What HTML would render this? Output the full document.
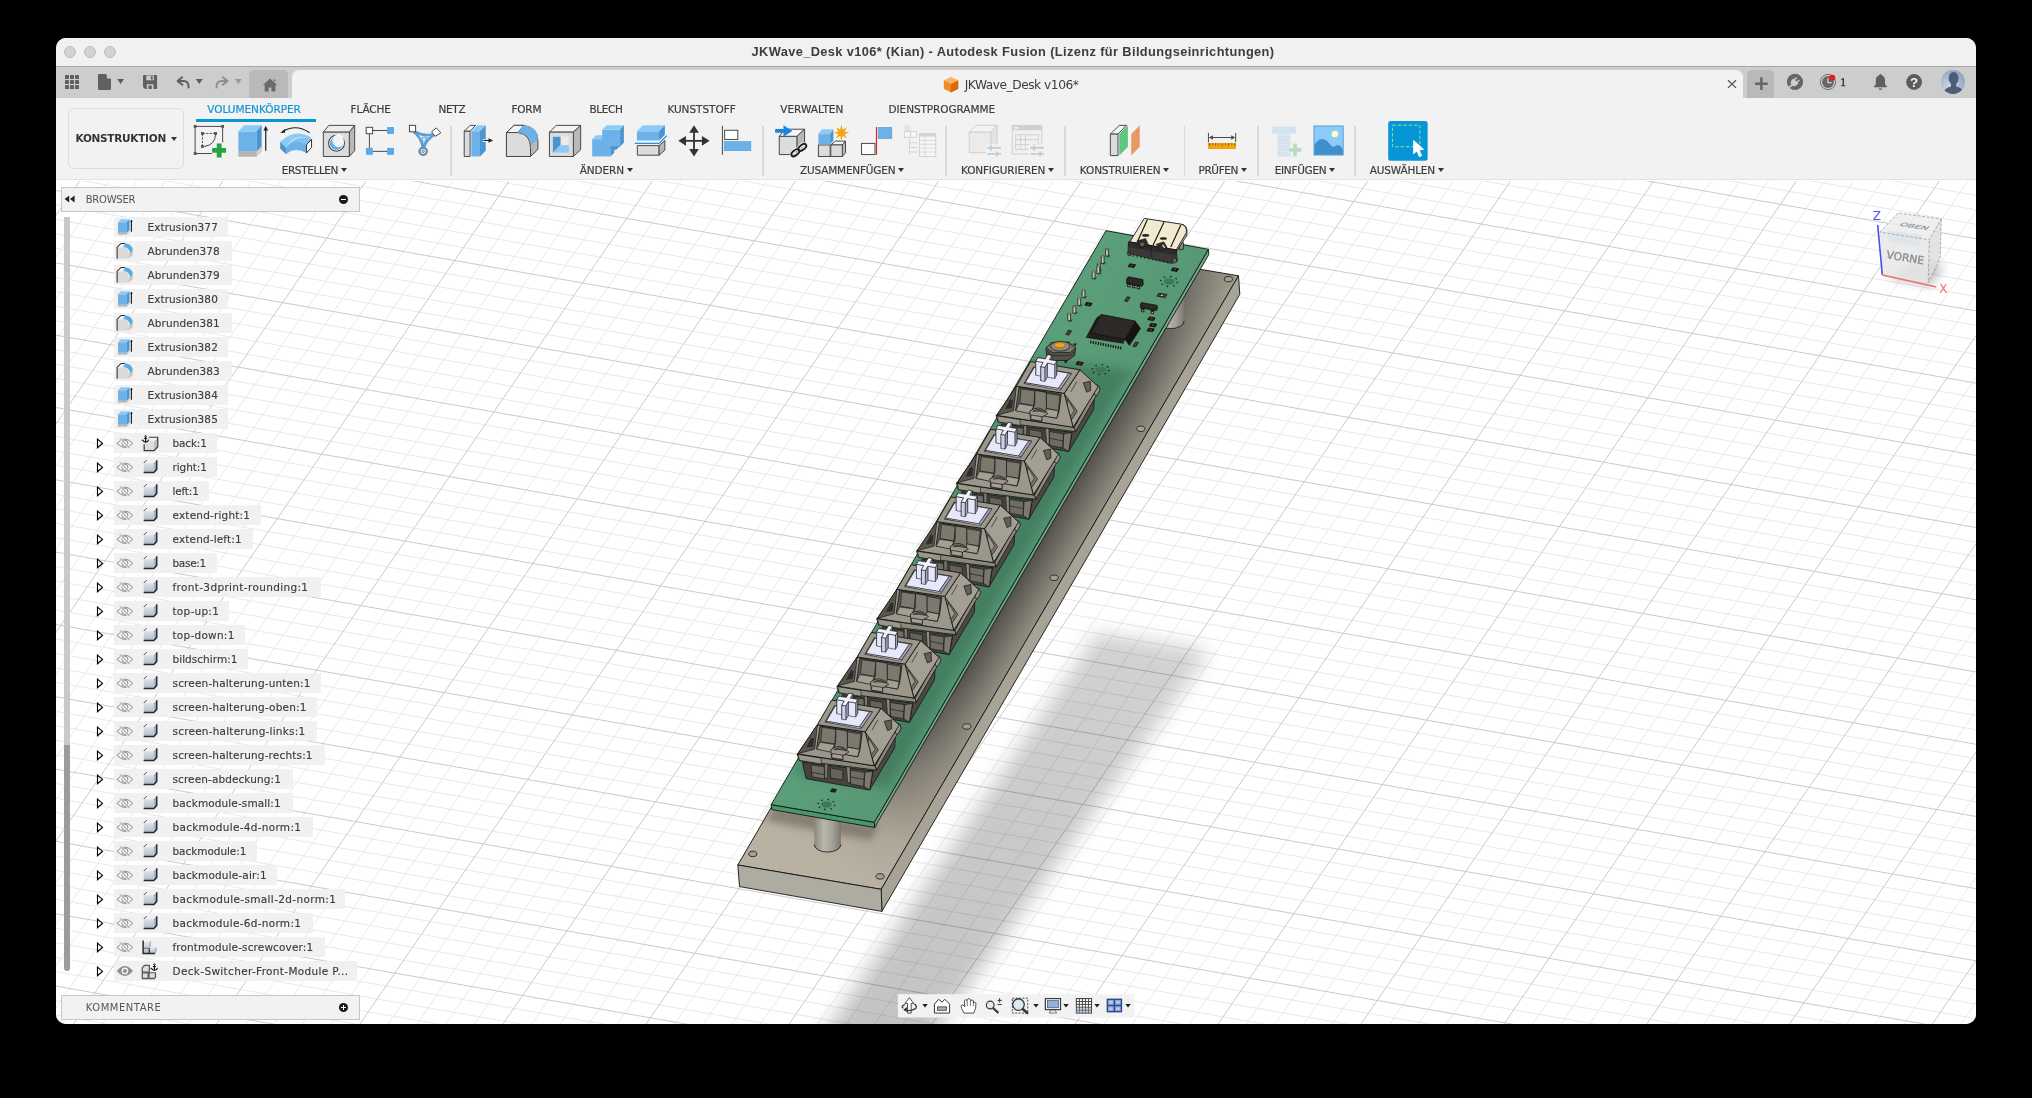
<!DOCTYPE html><html lang="de"><head><meta charset="utf-8"><title>JKWave_Desk v106* (Kian) - Autodesk Fusion</title><style>

*{box-sizing:border-box;margin:0;padding:0}
html,body{width:2032px;height:1098px;background:#000;overflow:hidden}
body{font-family:"DejaVu Sans","Liberation Sans",sans-serif;color:#3c3c3c;position:relative}
#win{will-change:transform;position:absolute;left:56px;top:38px;width:1920px;height:986px;background:#fff;border-radius:10px;overflow:hidden}
.abs{position:absolute}
#title{position:absolute;left:0;top:0;width:1920px;height:29px;background:#f1f1f1;border-bottom:1px solid #a6a6a6}
#title .t{font-family:"Liberation Sans",sans-serif;position:absolute;left:0;width:1914px;top:5.5px;line-height:16px;text-align:center;font-weight:bold;font-size:12.8px;color:#3d3d3d;white-space:nowrap}
.tl{position:absolute;top:8px;width:12px;height:12px;border-radius:50%;background:#d2d2d2;border:1px solid #bdbdbd}
#tabbar{position:absolute;left:0;top:29px;width:1920px;height:31px;background:#cdcdcd}
#doctab{position:absolute;left:236px;top:3px;width:1451px;height:28px;background:#f2f2f2;border-radius:7px 7px 0 0}
#doctab .n{position:absolute;left:0;top:0;white-space:nowrap;font-size:12.2px;line-height:15px;color:#3c3c3c}
#homeb{position:absolute;left:193px;top:3px;width:38.5px;height:28px;background:#b9b9b9;border-radius:5px 5px 0 0}
#plusb{position:absolute;left:1691px;top:3px;width:27px;height:28px;background:#b9b9b9;border-radius:5px 5px 0 0}
#ribbon{position:absolute;left:0;top:60px;width:1920px;height:82px;background:#f2f2f2;border-bottom:1px solid #e2e2e2}
.tab{-webkit-text-stroke:0.2px;position:absolute;top:4.3px;font-size:10.5px;color:#3c3c3c;white-space:nowrap;line-height:14px}
.grp{-webkit-text-stroke:0.2px;position:absolute;top:65.2px;font-size:10.5px;color:#3c3c3c;white-space:nowrap;line-height:14px}
.grp:after{content:"";position:absolute;right:-9px;top:5px;border:3.5px solid transparent;border-top:4px solid #333;border-bottom:0}
.sep{position:absolute;top:28px;width:1.5px;height:50px;background:#d9d9d9}
.ico{position:absolute;top:26px;width:34px;height:34px}
#vp{position:absolute;left:0;top:143px;width:1920px;height:843px;background:#fff;overflow:hidden}
.ph{position:absolute;left:5px;width:299px;height:25px;background:#f2f2f2;border:1px solid #c6c6c6;font-size:10px;color:#555;line-height:23px;padding-left:23.7px;}
.row{position:absolute;height:20px;background:linear-gradient(to bottom,rgba(240,240,240,0) 0.3px,rgba(240,240,240,.93) 0.3px,rgba(240,240,240,.93) 19.7px,rgba(240,240,240,0) 19.7px);font-size:10.5px;color:#3c3c3c;line-height:19px;white-space:nowrap}
.row span{position:absolute;top:0.8px;-webkit-text-stroke:0.15px}

</style></head><body><div id="win">
<div id="title">
<div class="tl" style="left:8px"></div>
<div class="tl" style="left:28px"></div>
<div class="tl" style="left:48px"></div>
<div class="t"><span id="ttl" style="letter-spacing:0.385px;">JKWave_Desk v106* (Kian) - Autodesk Fusion (Lizenz für Bildungseinrichtungen)</span></div>
</div>
<div id="tabbar"><div id="homeb"></div><div id="doctab"><div class="n" id="docname" style="left:672.7px;top:8.1px;letter-spacing:-0.455px;">JKWave_Desk v106*</div></div><div id="plusb"></div>
<svg class="abs" style="left:0;top:0" width="1920" height="31" viewBox="56 67 1920 31"><rect x="65.0" y="75.0" width="4" height="4" rx="0.6" fill="#606060"/><rect x="70.0" y="75.0" width="4" height="4" rx="0.6" fill="#606060"/><rect x="75.0" y="75.0" width="4" height="4" rx="0.6" fill="#606060"/><rect x="65.0" y="80.0" width="4" height="4" rx="0.6" fill="#606060"/><rect x="70.0" y="80.0" width="4" height="4" rx="0.6" fill="#606060"/><rect x="75.0" y="80.0" width="4" height="4" rx="0.6" fill="#606060"/><rect x="65.0" y="85.0" width="4" height="4" rx="0.6" fill="#606060"/><rect x="70.0" y="85.0" width="4" height="4" rx="0.6" fill="#606060"/><rect x="75.0" y="85.0" width="4" height="4" rx="0.6" fill="#606060"/><path d="M98 75.2q0-1.2 1.2-1.2h6.8l5 5v9.8q0 1.2-1.2 1.2h-10.6q-1.2 0-1.2-1.2z" fill="#606060"/><path d="M106.8 74.3v4.2h4.2z" fill="#cdcdcd"/><path d="M117.19999999999999 78.9h6.8l-3.4 5z" fill="#5a5a5a"/><path d="M143 76q0-1 1-1h12.1q1 0 1 1v12q0 1-1 1h-11.1l-2-2z" fill="#606060"/><path d="M146.3 75.6h7.6v4.600h-7.6zM146.8 84.3h6.6v4.7h-6.6z" fill="#cdcdcd"/><path d="M150.8 76.2h1.900v3.200h-1.900zM148.4 85.600h3.400v3.400h-3.400z" fill="#606060"/><path d="M149 76.4h2.2v3.4h-2.2zM148.6 85.9h3v3.1h-3z" fill="#606060" opacity="0"/><path d="M148.5 75.6h3.3v3.3h-3.3z" fill="#606060" opacity="0"/><path d="M182.2 77.2l-4.6 3.9 4.9 3.6" fill="none" stroke="#606060" stroke-width="2" stroke-linecap="round" stroke-linejoin="round"/><path d="M178.4 81.1h5.2q5 0 5 6.3" fill="none" stroke="#606060" stroke-width="2" stroke-linecap="round"/><path d="M195.9 78.9h6.8l-3.4 5z" fill="#5a5a5a"/><path d="M222.9 77.2l4.6 3.9-4.9 3.6" fill="none" stroke="#8f8f8f" stroke-width="2" stroke-linecap="round" stroke-linejoin="round"/><path d="M226.7 81.1h-5.2q-5 0-5 6.3" fill="none" stroke="#8f8f8f" stroke-width="2" stroke-linecap="round"/><path d="M234.9 78.9h6.8l-3.4 5z" fill="#9a9a9a"/><path d="M270 78.6l7.3 6.6h-1.9v6.4h-3.9v-4.2h-2.9v4.2h-3.9v-6.4h-1.9z" fill="#6b6b6b"/><path d="M273.6 79.6h1.8v2.6l-1.8-1.6z" fill="#6b6b6b"/><path d="M943.8 80.6l7.2-3.4 7.2 3.4v8.2l-7.2 3.6-7.2-3.6z" fill="#f08a24"/><path d="M943.8 80.6l7.2 3.4 7.2-3.4-7.2-3.4z" fill="#ffb266"/><path d="M951 84v8.4l7.2-3.6v-8.2z" fill="#d96a0c"/><path d="M1728 80.3l8 7.6M1736 80.3l-8 7.6" stroke="#555" stroke-width="1.3" fill="none"/><path d="M1761.4 77.3v12.7M1755 83.65h12.8" stroke="#666" stroke-width="2.5" fill="none"/><g transform="translate(1795 81.8)"><circle r="7.9" fill="#666"/><g transform="rotate(45)" fill="#cdcdcd"><path d="M-3.5 -1.3h7v2.3a3.5 3.5 0 0 1 -7 0z"/><rect x="-2.5" y="-4.3" width="1.4" height="3.4"/><rect x="1.1" y="-4.3" width="1.4" height="3.4"/><rect x="-0.9" y="3.5" width="1.8" height="6"/></g><circle r="7.1" fill="none" stroke="#666" stroke-width="1.6" stroke-dasharray="19.5 2.8" transform="rotate(150)"/></g><g transform="translate(1828 82)"><circle r="7.6" fill="none" stroke="#666" stroke-width="0.9"/><circle r="5.9" fill="#666"/><path d="M-0.2 -3.8v4.5h3.8" fill="none" stroke="#d4d4d4" stroke-width="1.2"/><circle cx="4.3" cy="-4.3" r="3" fill="#e41b1f"/></g><text x="1839.9" y="86" font-family="'Liberation Serif',serif" font-size="12.5" fill="#2e2e2e" stroke="#2e2e2e" stroke-width="0.25">1</text><g transform="translate(1880.4 82)" fill="#5f5f5f"><path d="M0 -7.9q1.1 0 1.2 1.2q3.4 1.1 3.4 5.2v3q0 1.6 1.9 2.9v0.9h-13v-0.9q1.9-1.3 1.9-2.9v-3q0-4.1 3.4-5.2q0.100-1.200 1.200-1.200z"/><path d="M-1.900 6.600h3.800q-0.300 1.500-1.900 1.500t-1.900-1.500z"/></g><circle cx="1914.1" cy="82" r="7.9" fill="#5c5c5c"/><text x="1914.1" y="86.8" text-anchor="middle" font-family="'Liberation Sans',sans-serif" font-weight="bold" font-size="13.5" fill="#f4f4f4">?</text><defs><radialGradient id="avg" cx="0.35" cy="0.7" r="0.9"><stop offset="0" stop-color="#cdd8e6"/><stop offset="1" stop-color="#7f98ba"/></radialGradient><clipPath id="avc"><circle cx="1953" cy="82" r="11.9"/></clipPath></defs><circle cx="1953" cy="82" r="11.9" fill="url(#avg)"/><g clip-path="url(#avc)" fill="#4e5d76"><ellipse cx="1953.6" cy="78.2" rx="4.9" ry="6.3"/><path d="M1951 82h5.200v4.500q5.400 1.600 6.600 4.200v4h-18.400v-4q1.200-2.600 6.600-4.200z"/></g></svg>
</div>
<div id="ribbon">
<div class="abs" style="left:12px;top:10px;width:116px;height:61px;border:1.5px solid #dcdcdc;border-radius:6px"></div>
<div class="abs" id="konst" style="letter-spacing:-0.270px;left:19.5px;top:33.3px;font-weight:bold;font-size:10.5px;color:#333;white-space:nowrap;line-height:14px">KONSTRUKTION</div>
<div class="abs" style="left:115px;top:38.5px;border:3.5px solid transparent;border-top:4px solid #333;border-bottom:0"></div>
<div class="tab" id="tab0" style="left:151.3px;color:#1394d6;letter-spacing:-0.028px;">VOLUMENKÖRPER</div>
<div class="tab" id="tab1" style="left:294.5px;letter-spacing:-0.117px;">FLÄCHE</div>
<div class="tab" id="tab2" style="left:382.4px;letter-spacing:-0.302px;">NETZ</div>
<div class="tab" id="tab3" style="left:455.4px;letter-spacing:-0.168px;">FORM</div>
<div class="tab" id="tab4" style="left:533.5px;letter-spacing:-0.364px;">BLECH</div>
<div class="tab" id="tab5" style="left:611.4px;letter-spacing:-0.036px;">KUNSTSTOFF</div>
<div class="tab" id="tab6" style="left:724.3px;letter-spacing:0.000px;">VERWALTEN</div>
<div class="tab" id="tab7" style="left:832.6px;letter-spacing:-0.080px;">DIENSTPROGRAMME</div>
<div class="abs" style="left:139.5px;top:20.5px;width:120px;height:3px;background:#0696d7"></div>
<div class="grp" id="grp0" style="left:225.7px;letter-spacing:-0.383px;">ERSTELLEN</div>
<div class="grp" id="grp1" style="left:523.8px;letter-spacing:-0.120px;">ÄNDERN</div>
<div class="grp" id="grp2" style="left:744.0px;letter-spacing:-0.192px;">ZUSAMMENFÜGEN</div>
<div class="grp" id="grp3" style="left:905.0px;letter-spacing:-0.154px;">KONFIGURIEREN</div>
<div class="grp" id="grp4" style="left:1023.8px;letter-spacing:-0.118px;">KONSTRUIEREN</div>
<div class="grp" id="grp5" style="left:1142.6px;letter-spacing:-0.424px;">PRÜFEN</div>
<div class="grp" id="grp6" style="left:1218.7px;letter-spacing:-0.280px;">EINFÜGEN</div>
<div class="grp" id="grp7" style="left:1313.8px;letter-spacing:-0.174px;">AUSWÄHLEN</div>
<div class="sep" style="left:394.1px"></div>
<div class="sep" style="left:706.4px"></div>
<div class="sep" style="left:889.2px"></div>
<div class="sep" style="left:1008.2px"></div>
<div class="sep" style="left:1127.5px"></div>
<div class="sep" style="left:1201.0px"></div>
<div class="sep" style="left:1298.2px"></div>
<svg class="abs" style="left:0;top:0" width="1920" height="82" viewBox="56 98 1920 82"><polyline points="195.12,126.40 222.63,126.40" fill="none" stroke="#4a4a4a" stroke-width="1" /><polyline points="195.12,126.40 195.12,153.53" fill="none" stroke="#4a4a4a" stroke-width="1" /><polyline points="222.63,126.40 222.63,142.39" fill="none" stroke="#4a4a4a" stroke-width="1" /><polyline points="195.12,153.53 211.75,153.53" fill="none" stroke="#4a4a4a" stroke-width="1" /><rect x="193.71" y="124.99" width="2.82" height="2.82" fill="#555" /><rect x="221.22" y="124.99" width="2.82" height="2.82" fill="#555" /><rect x="193.71" y="152.12" width="2.82" height="2.82" fill="#555" /><polyline points="202.41,146.49 202.41,133.44 215.59,133.44" fill="none" stroke="#4a4a4a" stroke-width="1" stroke-dasharray="2.2 1.2"/><path d="M215.59 133.44Q215.59 144.95 204.08 146.49" fill="none" stroke="#4a4a4a" stroke-width="1" stroke-linejoin="round" /><rect x="201.00" y="132.03" width="2.82" height="2.82" fill="#555" /><rect x="214.18" y="132.03" width="2.82" height="2.82" fill="#555" /><rect x="201.00" y="145.08" width="2.82" height="2.82" fill="#555" /><path d="M216.74 143.42L221.61 143.42 221.61 147.90 226.08 147.90 226.08 152.76 221.61 152.76 221.61 157.49 216.74 157.49 216.74 152.76 212.14 152.76 212.14 147.90 216.74 147.90Z" fill="#22a447" /><polygon points="238.37,151.35 256.54,151.35 261.66,146.23 261.66,151.35 256.54,156.72 238.37,156.72" fill="#b4b4b4" /><polygon points="256.54,151.35 261.66,146.23 261.66,151.35 256.54,156.72" fill="#d2d2d2" /><polygon points="238.37,131.52 256.54,131.52 256.54,151.35 238.37,151.35" fill="#6cb2e8" /><polygon points="238.37,131.52 243.74,125.37 261.66,125.37 256.54,131.52" fill="#8ccbf8" /><polygon points="256.54,131.52 261.66,125.37 261.66,146.23 256.54,151.35" fill="#4a94d0" /><polyline points="265.75,150.71 265.75,128.96" fill="none" stroke="#222" stroke-width="1.2" /><polygon points="265.75,125.76 268.06,130.49 263.45,130.49" fill="#222" /><path d="M280.21 141.75Q294.93 127.68 310.92 137.27L310.92 140.47Q294.93 131.52 285.97 147.51Z" fill="#8ccbf8" /><path d="M280.21 141.75L285.97 147.51 285.97 154.29 280.21 148.41Z" fill="#4a94d0" /><path d="M285.97 147.51Q294.93 136.63 306.44 144.95L306.44 153.01Q294.93 146.23 285.97 154.29Z" fill="#6cb2e8" /><path d="M285.97 147.51Q294.93 134.08 310.92 139.19L306.44 144.95Q294.93 137.91 285.97 147.51Z" fill="#7cc0f2" /><polygon points="306.44,144.95 311.56,139.19 311.56,147.51 306.44,153.01" fill="#fff" stroke="#333" stroke-width="1" stroke-linejoin="round" /><path d="M309.64 132.80Q296.21 123.20 282.13 131.77" fill="none" stroke="#222" stroke-width="1.1" stroke-linejoin="round" /><polygon points="280.21,133.05 285.33,128.70 284.95,132.80" fill="#222" /><polygon points="323.33,132.16 328.84,125.37 354.68,125.37 349.31,132.16" fill="#ededed" stroke="#4a4a4a" stroke-width="1" stroke-linejoin="round" /><polygon points="349.31,132.16 354.68,125.37 354.68,150.71 349.31,156.47" fill="#b9b9b9" stroke="#4a4a4a" stroke-width="1" stroke-linejoin="round" /><polygon points="323.33,132.16 349.31,132.16 349.31,156.47 323.33,156.47" fill="#dcdcdc" stroke="#4a4a4a" stroke-width="1" stroke-linejoin="round" /><circle cx="336.51" cy="143.29" r="7.93" fill="#fff" stroke="#444" stroke-width="1.1" /><circle cx="336.51" cy="143.29" r="6.14" fill="#6cb2e8" stroke="#4a94d0" stroke-width="0.8" /><path d="M333.31 137.27A6.40 6.40 0 0 1 342.91 142.39A5.37 5.37 0 0 0 333.31 137.27Z" fill="#fff" /><path d="M334.34 136.38A6.65 6.65 0 0 1 343.17 145.34A5.76 5.76 0 0 1 334.34 136.38Z" fill="#f2f2f2" /><polyline points="369.40,130.49 390.51,130.49" fill="none" stroke="#4a4a4a" stroke-width="1" /><polyline points="369.40,130.49 369.40,151.35 390.51,151.35" fill="none" stroke="#4a4a4a" stroke-width="1" /><rect x="366.20" y="127.29" width="6.40" height="6.40" fill="#fff" stroke="#4a4a4a" stroke-width="1" /><rect x="387.06" y="127.04" width="6.91" height="6.91" fill="#5ba9e6" /><rect x="365.94" y="147.90" width="6.91" height="6.91" fill="#5ba9e6" /><rect x="387.06" y="147.90" width="6.91" height="6.91" fill="#5ba9e6" /><path d="M413.29 131.52Q420.97 135.99 423.14 148.79" fill="none" stroke="#5b9fd8" stroke-width="2.6" stroke-linejoin="round" /><path d="M436.32 133.82Q426.72 137.91 423.14 148.79" fill="none" stroke="#5b9fd8" stroke-width="2.6" stroke-linejoin="round" /><path d="M413.93 131.52Q424.80 137.27 435.68 133.82" fill="none" stroke="#5b9fd8" stroke-width="2.6" stroke-linejoin="round" /><path d="M421.86 137.27L426.98 137.27 423.40 145.59Z" fill="#cfe3f5" stroke="#3f86c4" stroke-width="0.7" stroke-linejoin="round" /><rect x="409.45" y="125.37" width="6.14" height="6.40" fill="#fff" stroke="#4a4a4a" stroke-width="1" /><polygon points="436.32,127.93 440.80,132.80 435.04,136.38 431.59,131.77" fill="#fff" stroke="#4a4a4a" stroke-width="1" stroke-linejoin="round" /><circle cx="423.14" cy="151.35" r="4.86" fill="#5b9fd8" /><circle cx="423.14" cy="151.35" r="3.20" fill="#f4f4f4" stroke="#555" stroke-width="0.8" /><circle cx="423.14" cy="151.35" r="1.15" fill="none" stroke="#555" stroke-width="0.8" /><polygon points="464.21,131.26 470.10,125.37 475.47,125.37 470.10,131.26" fill="#f4f4f4" stroke="#4a4a4a" stroke-width="1" stroke-linejoin="round" /><polygon points="464.21,131.26 470.10,131.26 470.10,156.47 464.21,156.47" fill="#dcdcdc" stroke="#4a4a4a" stroke-width="1" stroke-linejoin="round" /><polygon points="471.38,131.26 479.95,131.26 479.95,156.47 471.38,156.47" fill="#6cb2e8" /><polygon points="471.38,131.26 477.01,125.37 485.71,125.37 479.95,131.26" fill="#8ccbf8" /><polygon points="479.95,131.26 485.71,125.37 485.71,150.71 479.95,156.47" fill="#4a94d0" /><rect x="482.90" y="139.19" width="4.09" height="2.82" fill="#f2f2f2" /><polyline points="483.41,140.47 490.19,140.47" fill="none" stroke="#222" stroke-width="1.1" /><polygon points="493.13,140.47 488.53,138.17 488.53,142.78" fill="#222" /><path d="M506.44 132.54L514.12 125.37 523.46 125.37Q538.17 127.68 537.92 140.47L537.92 149.43 530.50 156.47 506.44 156.47Z" fill="#b9b9b9" stroke="#4a4a4a" stroke-width="1" stroke-linejoin="round" /><path d="M506.44 132.54L517.70 132.54Q530.50 134.08 530.50 147.51L530.50 156.47 506.44 156.47Z" fill="#dcdcdc" stroke="#4a4a4a" stroke-width="1" stroke-linejoin="round" /><path d="M506.44 132.54L514.12 125.37 524.10 125.37 517.70 132.54Z" fill="#f4f4f4" stroke="#4a4a4a" stroke-width="1" stroke-linejoin="round" /><path d="M517.70 132.54L524.10 125.37Q538.17 127.04 537.92 139.19L531.52 144.95Q530.50 134.08 517.70 132.54Z" fill="#6cb2e8" /><polygon points="549.43,132.16 556.34,125.37 580.66,125.37 573.36,132.16" fill="#f4f4f4" stroke="#4a4a4a" stroke-width="1" stroke-linejoin="round" /><polygon points="573.36,132.16 580.66,125.37 580.66,149.69 573.36,156.47" fill="#b9b9b9" stroke="#4a4a4a" stroke-width="1" stroke-linejoin="round" /><polygon points="549.43,132.16 573.36,132.16 573.36,156.47 549.43,156.47" fill="#dcdcdc" stroke="#4a4a4a" stroke-width="1" stroke-linejoin="round" /><rect x="552.89" y="136.63" width="15.99" height="15.99" fill="#ececec" /><polygon points="552.89,136.63 560.57,136.63 560.57,144.95 552.89,152.63" fill="#4a94d0" /><polygon points="552.89,152.63 560.57,144.95 568.88,144.95 568.88,152.63" fill="#8ccbf8" /><polygon points="592.17,139.19 595.75,135.36 603.43,135.36 603.43,139.19" fill="#8ccbf8" /><polygon points="592.17,139.19 610.47,139.19 610.47,156.47 592.17,156.47" fill="#6cb2e8" /><polygon points="610.47,146.87 614.31,146.87 614.31,152.63 610.47,156.47" fill="#4a94d0" /><polygon points="602.15,129.60 620.07,129.60 620.07,146.87 602.15,146.87" fill="#6cb2e8" /><polygon points="602.15,129.60 606.63,125.37 623.91,125.37 620.07,129.60" fill="#8ccbf8" /><polygon points="620.07,129.60 623.91,125.37 623.91,142.39 620.07,146.87" fill="#4a94d0" /><polygon points="610.47,146.23 620.07,146.23 616.23,149.69 610.47,149.69" fill="#4a94d0" /><polygon points="637.34,145.59 659.09,145.59 659.09,155.19 637.34,155.19" fill="#dcdcdc" stroke="#4a4a4a" stroke-width="1" stroke-linejoin="round" /><polygon points="659.09,145.59 664.85,140.47 664.85,150.07 659.09,155.19" fill="#b9b9b9" stroke="#4a4a4a" stroke-width="1" stroke-linejoin="round" /><polygon points="636.96,131.26 659.09,131.26 659.09,140.47 636.96,140.47" fill="#6cb2e8" /><polygon points="636.96,131.26 642.84,125.37 664.85,125.37 659.09,131.26" fill="#8ccbf8" /><polygon points="659.09,131.26 664.85,125.37 664.85,134.72 659.09,140.47" fill="#4a94d0" /><polyline points="634.78,143.42 659.09,143.42 666.77,135.61" fill="none" stroke="#2a8fe0" stroke-width="1.3" /><polyline points="684.05,140.86 703.88,140.86" fill="none" stroke="#333" stroke-width="1.8" /><polyline points="694.03,130.88 694.03,150.71" fill="none" stroke="#333" stroke-width="1.8" /><polygon points="678.29,140.86 685.97,135.99 685.97,145.72" fill="#333" /><polygon points="709.64,140.86 701.96,135.99 701.96,145.72" fill="#333" /><polygon points="694.03,125.37 689.17,132.80 698.89,132.80" fill="#333" /><polygon points="694.03,156.47 689.17,149.05 698.89,149.05" fill="#333" /><polyline points="722.42,125.76 722.42,154.80" fill="none" stroke="#4a4a4a" stroke-width="1" /><rect x="724.60" y="130.24" width="13.18" height="9.21" fill="#fff" stroke="#4a4a4a" stroke-width="1" /><rect x="724.21" y="141.50" width="26.62" height="9.21" fill="#6cb2e8" stroke="#4f9bd6" stroke-width="0.6" /><polygon points="779.24,136.38 784.74,129.21 804.57,129.21 796.89,136.38" fill="#f6f6f6" stroke="#4a4a4a" stroke-width="1" stroke-linejoin="round" /><polygon points="796.89,136.38 804.57,129.21 804.57,147.51 796.89,154.55" fill="#b9b9b9" stroke="#4a4a4a" stroke-width="1" stroke-linejoin="round" /><polygon points="779.24,136.38 796.89,136.38 796.89,154.55 779.24,154.55" fill="#dcdcdc" stroke="#4a4a4a" stroke-width="1" stroke-linejoin="round" /><polygon points="775.14,128.96 783.46,128.96 783.46,125.37 792.42,130.88 783.46,136.63 783.46,132.80 775.14,132.80" fill="#1a86e0" /><ellipse cx="795.36" cy="152.76" rx="4.6" ry="2.5" transform="rotate(-38 795.36 152.76)" fill="none" stroke="#f2f2f2" stroke-width="3.4"/><ellipse cx="802.27" cy="147.38" rx="4.6" ry="2.5" transform="rotate(-38 802.27 147.38)" fill="none" stroke="#f2f2f2" stroke-width="3.4"/><ellipse cx="795.36" cy="152.76" rx="4.6" ry="2.5" transform="rotate(-38 795.36 152.76)" fill="none" stroke="#1e1e1e" stroke-width="1.9"/><ellipse cx="802.27" cy="147.38" rx="4.6" ry="2.5" transform="rotate(-38 802.27 147.38)" fill="none" stroke="#1e1e1e" stroke-width="1.9"/><polygon points="830.80,144.95 835.28,141.11 845.52,141.11 842.32,144.95" fill="#f6f6f6" stroke="#4a4a4a" stroke-width="1" stroke-linejoin="round" /><polygon points="842.32,144.95 845.52,141.11 845.52,152.63 842.32,156.47" fill="#b9b9b9" stroke="#4a4a4a" stroke-width="1" stroke-linejoin="round" /><rect x="818.39" y="144.95" width="11.77" height="11.52" fill="#dcdcdc" stroke="#4a4a4a" stroke-width="1" /><rect x="830.80" y="144.95" width="11.52" height="11.52" fill="#dcdcdc" stroke="#4a4a4a" stroke-width="1" /><polygon points="818.39,134.08 830.16,134.08 830.16,144.31 818.39,144.31" fill="#6cb2e8" /><polygon points="818.39,134.08 821.85,129.21 833.36,129.21 830.16,134.08" fill="#8ccbf8" /><polygon points="830.16,134.08 833.36,129.21 833.36,140.47 830.16,144.31" fill="#4a94d0" /><polygon points="841.42,124.86 842.70,129.72 847.03,127.19 844.50,131.52 849.36,132.80 844.50,134.07 847.03,138.41 842.70,135.87 841.42,140.73 840.15,135.87 835.81,138.41 838.35,134.07 833.49,132.80 838.35,131.52 835.81,127.19 840.15,129.72" fill="#f5a30a" /><rect x="861.51" y="143.42" width="13.44" height="11.13" fill="#fbfbfb" stroke="#4a4a4a" stroke-width="1" /><polyline points="876.48,127.04 876.48,154.80" fill="none" stroke="#d8232a" stroke-width="1.2" /><rect x="878.15" y="127.42" width="13.69" height="11.13" fill="#6cb2e8" stroke="#4f9bd6" stroke-width="0.6" /><rect x="904.38" y="125.37" width="6.14" height="5.89" fill="#d3e6f5" /><rect x="904.38" y="131.52" width="6.14" height="5.76" fill="#f8f8f8" stroke="#d4d4d4" stroke-width="1" /><rect x="910.78" y="131.52" width="5.76" height="5.76" fill="#f8f8f8" stroke="#d4d4d4" stroke-width="1" /><polyline points="909.50,139.19 909.50,154.55" fill="none" stroke="#d4d4d4" stroke-width="1" /><polyline points="909.50,142.78 916.92,142.78" fill="none" stroke="#d4d4d4" stroke-width="1" /><polyline points="909.50,147.51 916.92,147.51" fill="none" stroke="#d4d4d4" stroke-width="1" /><polyline points="909.50,151.99 916.92,151.99" fill="none" stroke="#d4d4d4" stroke-width="1" /><rect x="919.48" y="133.44" width="16.25" height="23.03" fill="#f6f6f6" stroke="#d4d4d4" stroke-width="1" /><rect x="919.48" y="133.44" width="16.25" height="3.20" fill="#d4d4d4" /><polyline points="919.48,140.47 935.73,140.47" fill="none" stroke="#d4d4d4" stroke-width="0.8" /><polyline points="919.48,144.31 935.73,144.31" fill="none" stroke="#d4d4d4" stroke-width="0.8" /><polyline points="919.48,148.15 935.73,148.15" fill="none" stroke="#d4d4d4" stroke-width="0.8" /><polyline points="919.48,151.99 935.73,151.99" fill="none" stroke="#d4d4d4" stroke-width="0.8" /><polyline points="924.85,136.63 924.85,156.47" fill="none" stroke="#d4d4d4" stroke-width="0.8" /><polygon points="969.21,132.16 975.99,125.37 997.11,125.37 990.71,132.16" fill="#f3f3f3" stroke="#d0d0d0" stroke-width="1" stroke-linejoin="round" /><polygon points="990.71,132.16 997.11,125.37 997.11,146.23 990.71,152.63" fill="#e3e3e3" stroke="#d0d0d0" stroke-width="1" stroke-linejoin="round" /><polygon points="969.21,132.16 990.71,132.16 990.71,152.63 969.21,152.63" fill="#ebebeb" stroke="#d0d0d0" stroke-width="1" stroke-linejoin="round" /><rect x="985.59" y="144.31" width="16.63" height="13.44" fill="#f2f2f2" /><rect x="987.13" y="146.87" width="13.82" height="1.92" fill="#cbcbcb" /><rect x="987.13" y="153.01" width="13.82" height="1.79" fill="#cbcbcb" /><rect x="990.07" y="145.34" width="1.92" height="5.37" fill="#a9d3ef" /><rect x="996.21" y="151.35" width="1.79" height="5.37" fill="#cbcbcb" /><rect x="1012.21" y="125.37" width="29.69" height="28.53" fill="#f0f0f0" stroke="#d0d0d0" stroke-width="1" /><rect x="1012.21" y="125.37" width="29.69" height="4.86" fill="#d0d0d0" /><rect x="1014.00" y="127.04" width="4.22" height="1.66" fill="#f6f6f6" /><rect x="1015.66" y="134.72" width="22.65" height="14.72" fill="none" stroke="#d0d0d0" stroke-width="1" /><polyline points="1020.78,134.72 1020.78,149.43" fill="none" stroke="#d0d0d0" stroke-width="1" /><polyline points="1025.52,134.72 1025.52,149.43" fill="none" stroke="#d0d0d0" stroke-width="1" /><polyline points="1015.66,139.58 1038.31,139.58" fill="none" stroke="#d0d0d0" stroke-width="1" /><polyline points="1015.66,144.57 1038.31,144.57" fill="none" stroke="#d0d0d0" stroke-width="1" /><rect x="1028.59" y="144.31" width="16.63" height="13.44" fill="#f2f2f2" /><rect x="1030.12" y="146.87" width="13.82" height="1.92" fill="#cbcbcb" /><rect x="1030.12" y="153.01" width="13.82" height="1.79" fill="#cbcbcb" /><rect x="1033.06" y="145.34" width="1.92" height="5.37" fill="#a9d3ef" /><rect x="1039.21" y="151.35" width="1.79" height="5.37" fill="#cbcbcb" /><polygon points="1110.35,134.08 1119.31,125.37 1126.35,125.37 1118.03,134.08" fill="#f6f6f6" stroke="#4a4a4a" stroke-width="1" stroke-linejoin="round" /><polygon points="1110.35,134.08 1118.03,134.08 1118.03,155.57 1110.35,155.57" fill="#dcdcdc" stroke="#4a4a4a" stroke-width="1" stroke-linejoin="round" /><polygon points="1119.31,134.08 1127.88,125.37 1127.88,146.87 1119.31,155.57" fill="#5cc683" /><polygon points="1131.21,134.33 1139.78,125.37 1139.78,146.87 1131.21,155.57" fill="#e59a63" /><rect x="1208.05" y="143.13" width="27.90" height="5.89" fill="#f5a30a" /><polyline points="1209.33,143.13 1209.33,145.69" fill="none" stroke="#6b4a08" stroke-width="0.8" /><polyline points="1212.53,143.13 1212.53,144.79" fill="none" stroke="#6b4a08" stroke-width="0.8" /><polyline points="1215.73,143.13 1215.73,145.69" fill="none" stroke="#6b4a08" stroke-width="0.8" /><polyline points="1218.93,143.13 1218.93,144.79" fill="none" stroke="#6b4a08" stroke-width="0.8" /><polyline points="1222.13,143.13 1222.13,145.69" fill="none" stroke="#6b4a08" stroke-width="0.8" /><polyline points="1225.33,143.13 1225.33,144.79" fill="none" stroke="#6b4a08" stroke-width="0.8" /><polyline points="1228.53,143.13 1228.53,145.69" fill="none" stroke="#6b4a08" stroke-width="0.8" /><polyline points="1231.72,143.13 1231.72,144.79" fill="none" stroke="#6b4a08" stroke-width="0.8" /><polyline points="1234.92,143.13 1234.92,145.69" fill="none" stroke="#6b4a08" stroke-width="0.8" /><polyline points="1208.44,132.89 1208.44,142.23" fill="none" stroke="#4a4a4a" stroke-width="1" /><polyline points="1235.69,132.89 1235.69,142.23" fill="none" stroke="#4a4a4a" stroke-width="1" /><polyline points="1210.99,137.50 1233.13,137.50" fill="none" stroke="#4a4a4a" stroke-width="1" /><polygon points="1208.82,137.50 1212.91,135.19 1212.91,139.80" fill="#4a4a4a" /><polygon points="1235.31,137.50 1231.21,135.19 1231.21,139.80" fill="#4a4a4a" /><rect x="1272.16" y="126.49" width="23.67" height="7.17" fill="#d3e2f0" rx="1"/><rect x="1277.53" y="133.66" width="12.80" height="23.03" fill="#dbe7f2" rx="1.5"/><polyline points="1277.53,136.47 1290.33,136.47" fill="none" stroke="#cddcea" stroke-width="0.7" /><polyline points="1277.53,138.78 1290.33,138.78" fill="none" stroke="#cddcea" stroke-width="0.7" /><polyline points="1277.53,141.08 1290.33,141.08" fill="none" stroke="#cddcea" stroke-width="0.7" /><polyline points="1277.53,143.38 1290.33,143.38" fill="none" stroke="#cddcea" stroke-width="0.7" /><polyline points="1277.53,145.69 1290.33,145.69" fill="none" stroke="#cddcea" stroke-width="0.7" /><polyline points="1277.53,147.99 1290.33,147.99" fill="none" stroke="#cddcea" stroke-width="0.7" /><polyline points="1277.53,150.29 1290.33,150.29" fill="none" stroke="#cddcea" stroke-width="0.7" /><polyline points="1277.53,152.60 1290.33,152.60" fill="none" stroke="#cddcea" stroke-width="0.7" /><polyline points="1277.53,154.90 1290.33,154.90" fill="none" stroke="#cddcea" stroke-width="0.7" /><path d="M1292.89 143.13L1297.24 143.13 1297.24 147.73 1301.85 147.73 1301.85 152.08 1297.24 152.08 1297.24 156.69 1292.89 156.69 1292.89 152.08 1288.15 152.08 1288.15 147.73 1292.89 147.73Z" fill="#b6dcc0" stroke="#f2f2f2" stroke-width="0.8" stroke-linejoin="round" /><rect x="1314.00" y="125.98" width="29.17" height="29.05" fill="#8ccbfa" stroke="#3d8fd0" stroke-width="0.8" /><path d="M1314.39 154.64L1314.39 144.79Q1321.68 133.91 1329.36 143.51Q1332.56 148.63 1335.75 145.69Q1339.59 143.51 1342.79 149.53L1342.79 154.64Z" fill="#3f8fcc" /><circle cx="1334.86" cy="133.91" r="3.20" fill="#ffffc8" /><rect x="1388.22" y="121.12" width="39.41" height="39.67" fill="#0696d7" rx="2.5"/><rect x="1392.44" y="125.21" width="27.38" height="21.50" fill="none" stroke="#8fe486" stroke-width="1" stroke-dasharray="3.4 2"/><polygon points="1413.17,139.67 1413.17,154.39 1416.75,151.57 1419.18,157.20 1422.26,155.80 1419.70,150.55 1424.30,149.53" fill="#fff" /></svg>
</div>
<div id="vp">
<svg class="abs" style="left:0;top:0" width="1920" height="843" viewBox="0 0 1920 843">
<path d="M53.6 -2.0L-2.0 78.9M82.2 -2.0L-2.0 120.6M110.9 -2.0L-2.0 162.3M139.6 -2.0L-2.0 204.0M196.9 -2.0L-2.0 287.5M225.5 -2.0L-2.0 329.2M254.1 -2.0L-2.0 370.9M282.8 -2.0L-2.0 412.6M340.1 -2.0L-2.0 496.0M368.7 -2.0L-2.0 537.7M397.4 -2.0L-2.0 579.4M426.0 -2.0L-2.0 621.1M483.3 -2.0L-2.0 704.6M511.9 -2.0L-2.0 746.3M540.5 -2.0L-2.0 788.0M569.2 -2.0L-2.0 829.7M626.4 -2.0L44.1 846.0M655.0 -2.0L72.7 846.0M683.7 -2.0L101.4 846.0M712.3 -2.0L130.0 846.0M769.5 -2.0L187.3 846.0M798.2 -2.0L215.9 846.0M826.8 -2.0L244.5 846.0M855.4 -2.0L273.2 846.0M912.6 -2.0L330.4 846.0M941.2 -2.0L359.0 846.0M969.8 -2.0L387.7 846.0M998.5 -2.0L416.3 846.0M1055.7 -2.0L473.5 846.0M1084.3 -2.0L502.2 846.0M1112.9 -2.0L530.8 846.0M1141.5 -2.0L559.4 846.0M1198.7 -2.0L616.6 846.0M1227.3 -2.0L645.2 846.0M1255.9 -2.0L673.9 846.0M1284.5 -2.0L702.5 846.0M1341.7 -2.0L759.7 846.0M1370.3 -2.0L788.3 846.0M1398.9 -2.0L816.9 846.0M1427.4 -2.0L845.5 846.0M1484.6 -2.0L902.7 846.0M1513.2 -2.0L931.3 846.0M1541.8 -2.0L959.9 846.0M1570.4 -2.0L988.5 846.0M1627.5 -2.0L1045.7 846.0M1656.1 -2.0L1074.3 846.0M1684.7 -2.0L1102.9 846.0M1713.3 -2.0L1131.5 846.0M1770.4 -2.0L1188.6 846.0M1799.0 -2.0L1217.2 846.0M1827.6 -2.0L1245.8 846.0M1856.1 -2.0L1274.4 846.0M1913.3 -2.0L1331.6 846.0M1922.0 26.9L1360.1 846.0M1922.0 68.5L1388.7 846.0M1922.0 110.2L1417.3 846.0M1922.0 193.5L1474.4 846.0M1922.0 235.1L1503.0 846.0M1922.0 276.8L1531.6 846.0M1922.0 318.4L1560.2 846.0M1922.0 401.7L1617.3 846.0M1922.0 443.3L1645.9 846.0M1922.0 485.0L1674.4 846.0M1922.0 526.6L1703.0 846.0M1922.0 609.9L1760.1 846.0M1922.0 651.5L1788.7 846.0M1922.0 693.2L1817.2 846.0M1922.0 734.8L1845.8 846.0M1922.0 818.1L1902.9 846.0M1909.0 -2.0L1922.0 0.3M1826.9 -2.0L1922.0 14.7M1744.7 -2.0L1922.0 29.2M1662.6 -2.0L1922.0 43.6M1498.2 -2.0L1922.0 72.5M1416.0 -2.0L1922.0 86.9M1333.8 -2.0L1922.0 101.4M1251.5 -2.0L1922.0 115.8M1087.0 -2.0L1922.0 144.7M1004.8 -2.0L1922.0 159.2M922.5 -2.0L1922.0 173.6M840.2 -2.0L1922.0 188.0M675.6 -2.0L1922.0 216.9M593.3 -2.0L1922.0 231.4M511.0 -2.0L1922.0 245.8M428.6 -2.0L1922.0 260.3M263.9 -2.0L1922.0 289.1M181.6 -2.0L1922.0 303.6M99.2 -2.0L1922.0 318.0M16.8 -2.0L1922.0 332.5M-2.0 23.6L1922.0 361.4M-2.0 38.1L1922.0 375.8M-2.0 52.6L1922.0 390.2M-2.0 67.0L1922.0 404.7M-2.0 96.0L1922.0 433.6M-2.0 110.4L1922.0 448.0M-2.0 124.9L1922.0 462.5M-2.0 139.4L1922.0 476.9M-2.0 168.3L1922.0 505.8M-2.0 182.8L1922.0 520.2M-2.0 197.2L1922.0 534.7M-2.0 211.7L1922.0 549.1M-2.0 240.6L1922.0 578.0M-2.0 255.1L1922.0 592.4M-2.0 269.6L1922.0 606.9M-2.0 284.0L1922.0 621.3M-2.0 313.0L1922.0 650.2M-2.0 327.4L1922.0 664.7M-2.0 341.9L1922.0 679.1M-2.0 356.4L1922.0 693.5M-2.0 385.3L1922.0 722.4M-2.0 399.8L1922.0 736.9M-2.0 414.2L1922.0 751.3M-2.0 428.7L1922.0 765.8M-2.0 457.6L1922.0 794.6M-2.0 472.1L1922.0 809.1M-2.0 486.6L1922.0 823.5M-2.0 501.0L1922.0 838.0M-2.0 530.0L1802.9 846.0M-2.0 544.4L1720.4 846.0M-2.0 558.9L1637.9 846.0M-2.0 573.4L1555.4 846.0M-2.0 602.3L1390.3 846.0M-2.0 616.8L1307.7 846.0M-2.0 631.2L1225.2 846.0M-2.0 645.7L1142.6 846.0M-2.0 674.6L977.4 846.0M-2.0 689.1L894.8 846.0M-2.0 703.5L812.2 846.0M-2.0 718.0L729.6 846.0M-2.0 746.9L564.3 846.0M-2.0 761.4L481.6 846.0M-2.0 775.9L398.9 846.0M-2.0 790.3L316.2 846.0M-2.0 819.3L150.8 846.0M-2.0 833.7L68.1 846.0" stroke="#e9e9e9" stroke-width="1" fill="none"/>
<path d="M24.9 -2.0L-2.0 37.2M168.2 -2.0L-2.0 245.8M311.4 -2.0L-2.0 454.3M454.6 -2.0L-2.0 662.8M597.8 -2.0L15.4 846.0M740.9 -2.0L158.6 846.0M884.0 -2.0L301.8 846.0M1027.1 -2.0L444.9 846.0M1170.1 -2.0L588.0 846.0M1313.1 -2.0L731.1 846.0M1456.0 -2.0L874.1 846.0M1599.0 -2.0L1017.1 846.0M1741.8 -2.0L1160.1 846.0M1884.7 -2.0L1303.0 846.0M1922.0 151.8L1445.9 846.0M1922.0 360.0L1588.7 846.0M1922.0 568.3L1731.5 846.0M1922.0 776.5L1874.3 846.0M1580.4 -2.0L1922.0 58.1M1169.3 -2.0L1922.0 130.3M757.9 -2.0L1922.0 202.5M346.3 -2.0L1922.0 274.7M-2.0 9.2L1922.0 346.9M-2.0 81.5L1922.0 419.1M-2.0 153.8L1922.0 491.3M-2.0 226.2L1922.0 563.6M-2.0 298.5L1922.0 635.8M-2.0 370.8L1922.0 708.0M-2.0 443.2L1922.0 780.2M-2.0 515.5L1885.4 846.0M-2.0 587.8L1472.8 846.0M-2.0 660.1L1060.0 846.0M-2.0 732.5L646.9 846.0M-2.0 804.8L233.5 846.0" stroke="#cbcbcb" stroke-width="1" fill="none"/>
<g transform="translate(-56 -181)"><defs><linearGradient id="bt" gradientUnits="userSpaceOnUse" x1="874.6" y1="827.5" x2="906.6" y2="846.1"><stop offset="0" stop-color="#54514c"/><stop offset="0.3" stop-color="#66635c"/><stop offset="0.7" stop-color="#807c72"/><stop offset="1" stop-color="#938e83"/></linearGradient><linearGradient id="bl" gradientUnits="userSpaceOnUse" x1="881.2" y1="889.3" x2="1238.5" y2="275.8"><stop offset="0" stop-color="#b9b1a2" stop-opacity="1"/><stop offset="0.07" stop-color="#b3ab9c" stop-opacity="0.92"/><stop offset="0.13" stop-color="#a39c8e" stop-opacity="0.7"/><stop offset="0.22" stop-color="#9a9487" stop-opacity="0.3"/><stop offset="0.32" stop-color="#9a958a" stop-opacity="0"/><stop offset="0.8" stop-color="#9a958a" stop-opacity="0"/><stop offset="1" stop-color="#b5ae9f" stop-opacity="0.45"/></linearGradient><linearGradient id="bf" gradientUnits="userSpaceOnUse" x1="771.9" y1="809.6" x2="763.8" y2="823.4"><stop offset="0" stop-color="#5f5a50" stop-opacity="0.5"/><stop offset="1" stop-color="#5f5a50" stop-opacity="0"/></linearGradient><linearGradient id="cyl" x1="0" y1="0" x2="1" y2="0"><stop offset="0" stop-color="#8b887f"/><stop offset="0.35" stop-color="#b9b6ab"/><stop offset="0.7" stop-color="#a29f95"/><stop offset="1" stop-color="#7b786f"/></linearGradient><filter id="aob" x="-10%" y="-10%" width="120%" height="120%"><feGaussianBlur stdDeviation="5"/></filter><filter id="aob2" x="-10%" y="-40%" width="120%" height="180%"><feGaussianBlur stdDeviation="3.5"/></filter><filter id="shb" x="-30%" y="-30%" width="160%" height="160%"><feGaussianBlur stdDeviation="9.5"/></filter><linearGradient id="shg" gradientUnits="userSpaceOnUse" x1="1150" y1="630" x2="880" y2="1030"><stop offset="0" stop-color="#000" stop-opacity="0.175"/><stop offset="0.5" stop-color="#000" stop-opacity="0.21"/><stop offset="1" stop-color="#000" stop-opacity="0.235"/></linearGradient><linearGradient id="pg" gradientUnits="userSpaceOnUse" x1="771.2" y1="804.6" x2="849.0" y2="849.9"><stop offset="0" stop-color="#5a9f79"/><stop offset="0.55" stop-color="#5a9c77"/><stop offset="1" stop-color="#579875"/></linearGradient></defs><g filter="url(#shb)"><polygon points="1097.0,633.0 1199.0,648.0 1209.0,654.0 918.0,1056.0 809.0,1056.0" fill="url(#shg)" /></g><polygon points="737.8,865.0 881.2,889.3 1238.5,275.8 1095.1,251.5" fill="url(#bt)" /><polygon points="737.8,865.0 881.2,889.3 1238.5,275.8 1095.1,251.5" fill="url(#bl)" /><g filter="url(#aob2)"><polygon points="773.9,806.1 879.2,825.6 870.6,840.2 765.4,820.8" fill="#5a554b" opacity="0.5"/></g><polygon points="737.8,865.0 881.2,889.3 1238.5,275.8 1095.1,251.5" fill="none" stroke="#141414" stroke-width="0.9" stroke-linejoin="round" /><polygon points="881.2,889.3 881.9,911.4 1239.8,294.3 1238.5,275.8" fill="#a7a497" stroke="#141414" stroke-width="0.9" stroke-linejoin="round" /><polygon points="737.8,865.0 881.2,889.3 881.9,911.4 739.5,886.6" fill="#aeaba0" stroke="#141414" stroke-width="0.9" stroke-linejoin="round" /><ellipse cx="752.8" cy="853.9" rx="4.1" ry="2.7" fill="#a29f94" stroke="#141414" stroke-width="0.8" /><ellipse cx="880.1" cy="876.4" rx="4.1" ry="2.7" fill="#a29f94" stroke="#141414" stroke-width="0.8" /><ellipse cx="1228.4" cy="279.1" rx="4.1" ry="2.7" fill="#a29f94" stroke="#141414" stroke-width="0.8" /><ellipse cx="1054.2" cy="577.8" rx="4.1" ry="2.7" fill="#a29f94" stroke="#141414" stroke-width="0.8" /><ellipse cx="966.8" cy="726.5" rx="4.1" ry="2.7" fill="#a29f94" stroke="#141414" stroke-width="0.8" /><ellipse cx="1140.8" cy="428.8" rx="4.1" ry="2.7" fill="#a29f94" stroke="#141414" stroke-width="0.8" /><path d="M814.3 818V844.5A13.3 7.6 0 0 0 840.9 844.5V820z" fill="url(#cyl)"/><path d="M814.3 844.5A13.3 7.6 0 0 0 840.9 844.5" fill="none" stroke="#141414" stroke-width="0.8"/><path d="M1157.5 290V321A13.3 7.6 0 0 0 1184.1 321V285z" fill="url(#cyl)"/><path d="M1157.5 321A13.3 7.6 0 0 0 1184.1 321" fill="none" stroke="#141414" stroke-width="0.8"/><polygon points="874.4,822.3 874.6,827.5 1208.8,254.6 1208.4,249.3" fill="#70aa8a" stroke="#141414" stroke-width="0.9" stroke-linejoin="round" /><polygon points="771.2,804.6 874.4,822.3 874.6,827.5 771.9,809.6" fill="#46996c" stroke="#141414" stroke-width="0.9" stroke-linejoin="round" /><polygon points="771.2,804.6 874.4,822.3 1208.4,249.3 1106.0,230.7" fill="url(#pg)" stroke="#141414" stroke-width="0.9" stroke-linejoin="round" /><g filter="url(#aob)"><polygon points="793.8,773.8 889.2,786.9 1131.8,370.4 1036.4,357.3" fill="#1f4a36" opacity="0.33"/></g><polygon points="1179.15,243.25 1183.46,242.49 1183.46,249.18 1179.82,249.95" fill="#8b877b" stroke="#141414" stroke-width="0.7" stroke-linejoin="round" /><path d="M1181.54 224.13Q1187.28 225.56 1187.00 231.30L1186.80 235.12 1177.05 250.71 1176.29 247.08Z" fill="#cfc8ae" stroke="#141414" stroke-width="0.8" stroke-linejoin="round" /><path d="M1144.25 218.39L1181.07 224.13Q1187.28 225.56 1186.33 232.73L1176.29 249.95 1129.90 241.82Z" fill="#f1ead1" stroke="#141414" stroke-width="0.9" stroke-linejoin="round" /><polyline points="1137.08,242.49 1147.41,219.54" fill="none" stroke="#141414" stroke-width="1.15" /><polyline points="1153.05,245.36 1164.04,222.02" fill="none" stroke="#141414" stroke-width="1.15" /><polyline points="1170.74,247.08 1180.78,224.89" fill="none" stroke="#141414" stroke-width="1.15" /><ellipse cx="1145.7" cy="235.4" rx="3.6" ry="1.3" fill="#222" /><ellipse cx="1163.4" cy="238.5" rx="3.6" ry="1.3" fill="#222" /><polygon points="1128.47,241.82 1176.29,249.95 1177.24,260.94 1171.50,263.33 1127.99,253.29" fill="#2e2c2a" stroke="#141414" stroke-width="0.8" stroke-linejoin="round" /><polygon points="1128.47,247.08 1176.76,255.21 1176.95,260.94 1171.50,263.33 1127.99,253.29" fill="#3b3937" /><polyline points="1150.94,245.64 1150.94,256.64" fill="none" stroke="#141414" stroke-width="0.7" /><polygon points="1137.08,240.86 1145.68,238.47 1148.55,245.16 1139.95,248.03" fill="#2e2c2a" stroke="#141414" stroke-width="0.5" stroke-linejoin="round" /><polygon points="1156.20,244.21 1163.85,241.82 1167.20,247.56 1160.51,250.90" fill="#2e2c2a" stroke="#141414" stroke-width="0.5" stroke-linejoin="round" /><polygon points="1139.95,243.25 1143.29,242.49 1144.25,245.16 1141.09,246.12" fill="#6b6864" /><polygon points="1161.94,244.97 1163.38,244.40 1165.29,247.84 1164.04,248.22" fill="#d8d4c8" /><polyline points="1133.25,254.73 1133.25,256.83" fill="none" stroke="#111" stroke-width="0.8" /><polyline points="1137.08,255.44 1137.08,257.55" fill="none" stroke="#111" stroke-width="0.8" /><polyline points="1140.90,256.16 1140.90,258.27" fill="none" stroke="#111" stroke-width="0.8" /><polyline points="1144.73,256.88 1144.73,258.98" fill="none" stroke="#111" stroke-width="0.8" /><polyline points="1148.55,257.60 1148.55,259.70" fill="none" stroke="#111" stroke-width="0.8" /><polyline points="1152.38,258.31 1152.38,260.42" fill="none" stroke="#111" stroke-width="0.8" /><polyline points="1156.20,259.03 1156.20,261.13" fill="none" stroke="#111" stroke-width="0.8" /><polyline points="1160.03,259.75 1160.03,261.85" fill="none" stroke="#111" stroke-width="0.8" /><polyline points="1163.85,260.47 1163.85,262.57" fill="none" stroke="#111" stroke-width="0.8" /><polyline points="1167.68,261.18 1167.68,263.29" fill="none" stroke="#111" stroke-width="0.8" /><polygon points="1127.51,252.34 1130.57,252.81 1130.57,255.68 1127.99,255.49" fill="#55524e" stroke="#141414" stroke-width="0.6" stroke-linejoin="round" /><polygon points="1172.65,258.55 1176.48,258.17 1176.48,262.19 1173.23,263.33" fill="#6b6860" stroke="#141414" stroke-width="0.6" stroke-linejoin="round" /><polygon points="1108.2,255.0 1110.4,254.8 1109.2,257.2 1106.4,257.0" fill="#2e5743" /><polygon points="1105.6,249.2 1108.4,248.8 1108.4,255.8 1105.6,256.2" fill="#cdc8b4" stroke="#1e1e18" stroke-width="0.8" stroke-linejoin="round" /><ellipse cx="1107.0" cy="249.0" rx="1.3" ry="0.7" fill="#e0dcc9" stroke="#2a2a22" stroke-width="0.5" /><polygon points="1103.9,262.3 1106.1,262.1 1104.9,264.5 1102.1,264.3" fill="#2e5743" /><polygon points="1101.3,256.5 1104.1,256.1 1104.1,263.1 1101.3,263.5" fill="#cdc8b4" stroke="#1e1e18" stroke-width="0.8" stroke-linejoin="round" /><ellipse cx="1102.7" cy="256.3" rx="1.3" ry="0.7" fill="#e0dcc9" stroke="#2a2a22" stroke-width="0.5" /><polygon points="1100.0,269.6 1102.2,269.4 1101.0,271.8 1098.2,271.6" fill="#2e5743" /><polygon points="1097.4,263.8 1100.2,263.4 1100.2,270.4 1097.4,270.8" fill="#cdc8b4" stroke="#1e1e18" stroke-width="0.8" stroke-linejoin="round" /><ellipse cx="1098.8" cy="263.6" rx="1.3" ry="0.7" fill="#e0dcc9" stroke="#2a2a22" stroke-width="0.5" /><polygon points="1099.5,272.4 1101.7,272.2 1100.5,274.6 1097.7,274.4" fill="#2e5743" /><polygon points="1096.9,266.6 1099.7,266.2 1099.7,273.2 1096.9,273.6" fill="#cdc8b4" stroke="#1e1e18" stroke-width="0.8" stroke-linejoin="round" /><ellipse cx="1098.3" cy="266.4" rx="1.3" ry="0.7" fill="#e0dcc9" stroke="#2a2a22" stroke-width="0.5" /><polygon points="1094.8,277.4 1097.0,277.2 1095.8,279.6 1093.0,279.4" fill="#2e5743" /><polygon points="1092.2,271.6 1095.0,271.2 1095.0,278.2 1092.2,278.6" fill="#cdc8b4" stroke="#1e1e18" stroke-width="0.8" stroke-linejoin="round" /><ellipse cx="1093.6" cy="271.4" rx="1.3" ry="0.7" fill="#e0dcc9" stroke="#2a2a22" stroke-width="0.5" /><polygon points="1084.7,296.3 1086.9,296.1 1085.7,298.5 1082.9,298.3" fill="#2e5743" /><polygon points="1082.1,290.5 1084.9,290.1 1084.9,297.1 1082.1,297.5" fill="#cdc8b4" stroke="#1e1e18" stroke-width="0.8" stroke-linejoin="round" /><ellipse cx="1083.5" cy="290.3" rx="1.3" ry="0.7" fill="#e0dcc9" stroke="#2a2a22" stroke-width="0.5" /><polygon points="1080.4,304.4 1082.6,304.2 1081.4,306.6 1078.6,306.4" fill="#2e5743" /><polygon points="1077.8,298.6 1080.6,298.2 1080.6,305.2 1077.8,305.6" fill="#cdc8b4" stroke="#1e1e18" stroke-width="0.8" stroke-linejoin="round" /><ellipse cx="1079.2" cy="298.4" rx="1.3" ry="0.7" fill="#e0dcc9" stroke="#2a2a22" stroke-width="0.5" /><polygon points="1075.6,312.1 1077.8,311.9 1076.6,314.3 1073.8,314.1" fill="#2e5743" /><polygon points="1073.0,306.3 1075.8,305.9 1075.8,312.9 1073.0,313.3" fill="#cdc8b4" stroke="#1e1e18" stroke-width="0.8" stroke-linejoin="round" /><ellipse cx="1074.4" cy="306.1" rx="1.3" ry="0.7" fill="#e0dcc9" stroke="#2a2a22" stroke-width="0.5" /><polygon points="1070.4,319.7 1072.6,319.5 1071.4,321.9 1068.6,321.7" fill="#2e5743" /><polygon points="1067.8,313.9 1070.6,313.5 1070.6,320.5 1067.8,320.9" fill="#cdc8b4" stroke="#1e1e18" stroke-width="0.8" stroke-linejoin="round" /><ellipse cx="1069.2" cy="313.7" rx="1.3" ry="0.7" fill="#e0dcc9" stroke="#2a2a22" stroke-width="0.5" /><polygon points="1128.2,266.5 1133.9,267.5 1135.5,264.7 1129.8,263.8" fill="#1e1714" stroke="#0e0b0a" stroke-width="0.8" stroke-linejoin="round" /><ellipse cx="1131.8" cy="265.6" rx="1.5" ry="0.8" fill="#6e3c27" /><polygon points="1171.3,270.5 1177.0,271.5 1178.6,268.8 1172.9,267.8" fill="#1e1714" stroke="#0e0b0a" stroke-width="0.8" stroke-linejoin="round" /><ellipse cx="1174.9" cy="269.6" rx="1.5" ry="0.8" fill="#6e3c27" /><polygon points="1127.51,282.94 1130.19,283.42 1130.19,287.24 1127.51,286.76" fill="#2a2624" stroke="#0c0b0a" stroke-width="0.5" stroke-linejoin="round" /><polygon points="1128.09,285.04 1129.62,285.33 1129.62,286.38 1128.09,286.09" fill="#b9b2a2" /><polygon points="1132.30,283.89 1134.97,284.37 1134.97,288.20 1132.30,287.72" fill="#2a2624" stroke="#0c0b0a" stroke-width="0.5" stroke-linejoin="round" /><polygon points="1132.87,286.00 1134.40,286.29 1134.40,287.34 1132.87,287.05" fill="#b9b2a2" /><polygon points="1137.08,284.85 1139.75,285.33 1139.75,289.15 1137.08,288.68" fill="#2a2624" stroke="#0c0b0a" stroke-width="0.5" stroke-linejoin="round" /><polygon points="1137.65,286.95 1139.18,287.24 1139.18,288.29 1137.65,288.01" fill="#b9b2a2" /><polygon points="1128.47,276.72 1142.81,279.59 1143.29,284.85 1141.86,286.29 1126.56,283.42 1126.75,278.63" fill="#2b2826" stroke="#0c0b0a" stroke-width="0.7" stroke-linejoin="round" /><ellipse cx="1169.1" cy="281.5" rx="5.4" ry="3.1" fill="#3f775a" /><ellipse cx="1177.3" cy="282.5" rx="0.9" ry="0.8" fill="#16261d" /><ellipse cx="1173.8" cy="285.7" rx="0.9" ry="0.8" fill="#16261d" /><ellipse cx="1167.4" cy="286.4" rx="0.9" ry="0.8" fill="#16261d" /><ellipse cx="1162.1" cy="284.3" rx="0.9" ry="0.8" fill="#16261d" /><ellipse cx="1160.9" cy="280.5" rx="0.9" ry="0.8" fill="#16261d" /><ellipse cx="1164.5" cy="277.3" rx="0.9" ry="0.8" fill="#16261d" /><ellipse cx="1170.8" cy="276.6" rx="0.9" ry="0.8" fill="#16261d" /><ellipse cx="1176.1" cy="278.7" rx="0.9" ry="0.8" fill="#16261d" /><polygon points="1156.8,296.2 1165.2,297.6 1167.0,294.5 1158.7,293.1" fill="#4a4640" stroke="#15110f" stroke-width="0.7" stroke-linejoin="round" /><polygon points="1159.8,296.0 1163.0,296.6 1164.1,294.7 1160.9,294.1" fill="#cfcabb" stroke="#15110f" stroke-width="0.7" stroke-linejoin="round" /><polygon points="1124.6,301.1 1127.5,301.6 1130.1,297.3 1127.1,296.8" fill="#4a4038" stroke="#15110f" stroke-width="0.7" stroke-linejoin="round" /><polygon points="1141.37,307.77 1144.05,308.25 1144.05,312.08 1141.37,311.60" fill="#2a2624" stroke="#0c0b0a" stroke-width="0.5" stroke-linejoin="round" /><polygon points="1141.94,309.88 1143.47,310.16 1143.47,311.22 1141.94,310.93" fill="#b9b2a2" /><polygon points="1150.93,309.69 1153.61,310.16 1153.61,313.99 1150.93,313.51" fill="#2a2624" stroke="#0c0b0a" stroke-width="0.5" stroke-linejoin="round" /><polygon points="1151.50,311.79 1153.03,312.08 1153.03,313.13 1151.50,312.84" fill="#b9b2a2" /><polygon points="1141.37,302.51 1157.15,305.38 1157.43,308.73 1156.19,310.64 1140.41,307.77 1140.41,304.43" fill="#2b2826" stroke="#0c0b0a" stroke-width="0.7" stroke-linejoin="round" /><polygon points="1147.7,319.7 1153.5,320.6 1155.1,317.9 1149.4,316.9" fill="#1e1714" stroke="#0e0b0a" stroke-width="0.8" stroke-linejoin="round" /><ellipse cx="1151.4" cy="318.8" rx="1.5" ry="0.8" fill="#6e3c27" /><polygon points="1149.4,326.0 1155.1,327.0 1156.7,324.2 1151.0,323.2" fill="#1e1714" stroke="#0e0b0a" stroke-width="0.8" stroke-linejoin="round" /><ellipse cx="1153.0" cy="325.1" rx="1.5" ry="0.8" fill="#6e3c27" /><polygon points="1147.0,330.8 1152.7,331.7 1154.3,329.0 1148.6,328.0" fill="#1e1714" stroke="#0e0b0a" stroke-width="0.8" stroke-linejoin="round" /><ellipse cx="1150.6" cy="329.9" rx="1.5" ry="0.8" fill="#6e3c27" /><polygon points="1084.8,305.1 1090.5,306.1 1092.1,303.3 1086.4,302.4" fill="#1e1714" stroke="#0e0b0a" stroke-width="0.8" stroke-linejoin="round" /><ellipse cx="1088.5" cy="304.2" rx="1.5" ry="0.8" fill="#6e3c27" /><polygon points="1076.0,364.3 1081.7,365.3 1083.3,362.5 1077.6,361.6" fill="#1e1714" stroke="#0e0b0a" stroke-width="0.8" stroke-linejoin="round" /><ellipse cx="1079.7" cy="363.4" rx="1.5" ry="0.8" fill="#6e3c27" /><polygon points="1065.8,334.5 1069.1,335.1 1071.6,330.8 1068.3,330.2" fill="#4a4038" stroke="#15110f" stroke-width="0.7" stroke-linejoin="round" /><polygon points="1132.8,346.3 1135.9,346.8 1138.5,342.5 1135.3,342.0" fill="#4a4038" stroke="#15110f" stroke-width="0.7" stroke-linejoin="round" /><polygon points="1135.63,321.16 1140.89,328.53 1129.41,346.03 1124.63,339.33" fill="#151312" /><polygon points="1096.42,317.81 1101.20,314.47 1090.68,333.12 1085.71,337.71" fill="#1c1917" /><polygon points="1085.71,337.71 1090.68,333.12 1125.11,339.33 1123.39,343.83" fill="#23201e" /><polyline points="1091.16,340.57 1090.59,343.44" fill="none" stroke="#141210" stroke-width="1.2" /><polyline points="1093.65,341.07 1093.07,343.94" fill="none" stroke="#141210" stroke-width="1.2" /><polyline points="1096.13,341.57 1095.56,344.44" fill="none" stroke="#141210" stroke-width="1.2" /><polyline points="1098.62,342.07 1098.05,344.94" fill="none" stroke="#141210" stroke-width="1.2" /><polyline points="1101.11,342.56 1100.53,345.43" fill="none" stroke="#141210" stroke-width="1.2" /><polyline points="1103.59,343.06 1103.02,345.93" fill="none" stroke="#141210" stroke-width="1.2" /><polyline points="1106.08,343.56 1105.51,346.43" fill="none" stroke="#141210" stroke-width="1.2" /><polyline points="1108.57,344.06 1107.99,346.92" fill="none" stroke="#141210" stroke-width="1.2" /><polyline points="1111.05,344.55 1110.48,347.42" fill="none" stroke="#141210" stroke-width="1.2" /><polyline points="1113.54,345.05 1112.97,347.92" fill="none" stroke="#141210" stroke-width="1.2" /><polyline points="1116.03,345.55 1115.45,348.42" fill="none" stroke="#141210" stroke-width="1.2" /><polyline points="1118.51,346.04 1117.94,348.91" fill="none" stroke="#141210" stroke-width="1.2" /><polyline points="1121.00,346.54 1120.42,349.41" fill="none" stroke="#141210" stroke-width="1.2" /><polygon points="1101.20,314.47 1135.63,321.16 1125.11,339.33 1090.68,333.12" fill="#2d2927" stroke="#0c0b0a" stroke-width="0.8" stroke-linejoin="round" /><circle cx="1094.70" cy="332.64" r="0.86" fill="#1a1816" /><polygon points="1064.39,358.94 1067.25,359.41 1066.97,363.24 1064.10,362.57" fill="#2a2826" /><polygon points="1072.51,343.63 1076.82,343.16 1075.57,346.50" fill="#2a2826" /><polygon points="1045.93,347.94 1051.48,342.68 1068.69,342.20 1075.57,347.94 1074.62,355.59 1067.92,360.37 1053.39,360.66 1046.69,355.59" fill="#55524c" stroke="#141414" stroke-width="0.8" stroke-linejoin="round" /><polyline points="1046.69,351.29 1053.20,355.88 1070.12,355.59 1074.90,351.29" fill="none" stroke="#141414" stroke-width="0.6" /><polygon points="1045.93,347.94 1051.48,342.68 1068.69,342.20 1075.57,347.94 1070.41,352.43 1052.91,352.72" fill="#7a766c" stroke="#141414" stroke-width="0.7" stroke-linejoin="round" /><circle cx="1060.27" cy="346.03" r="0.10" fill="none" /><ellipse cx="1060.3" cy="346.2" rx="9.6" ry="4.9" fill="#8f8b7f" stroke="#141414" stroke-width="0.7" /><ellipse cx="1059.8" cy="345.2" rx="5.4" ry="2.6" fill="#f5a21b" stroke="#8a5a08" stroke-width="0.5" /><ellipse cx="1100.7" cy="369.6" rx="5.4" ry="3.1" fill="#3f775a" /><ellipse cx="1109.0" cy="370.6" rx="0.9" ry="0.8" fill="#16261d" /><ellipse cx="1105.4" cy="373.8" rx="0.9" ry="0.8" fill="#16261d" /><ellipse cx="1099.1" cy="374.5" rx="0.9" ry="0.8" fill="#16261d" /><ellipse cx="1093.7" cy="372.4" rx="0.9" ry="0.8" fill="#16261d" /><ellipse cx="1092.5" cy="368.7" rx="0.9" ry="0.8" fill="#16261d" /><ellipse cx="1096.1" cy="365.5" rx="0.9" ry="0.8" fill="#16261d" /><ellipse cx="1102.4" cy="364.7" rx="0.9" ry="0.8" fill="#16261d" /><ellipse cx="1107.7" cy="366.9" rx="0.9" ry="0.8" fill="#16261d" /><ellipse cx="826.5" cy="804.5" rx="5.4" ry="3.1" fill="#3f775a" /><ellipse cx="834.7" cy="805.5" rx="0.9" ry="0.8" fill="#16261d" /><ellipse cx="831.1" cy="808.7" rx="0.9" ry="0.8" fill="#16261d" /><ellipse cx="824.8" cy="809.4" rx="0.9" ry="0.8" fill="#16261d" /><ellipse cx="819.5" cy="807.3" rx="0.9" ry="0.8" fill="#16261d" /><ellipse cx="818.3" cy="803.5" rx="0.9" ry="0.8" fill="#16261d" /><ellipse cx="821.9" cy="800.3" rx="0.9" ry="0.8" fill="#16261d" /><ellipse cx="828.2" cy="799.6" rx="0.9" ry="0.8" fill="#16261d" /><ellipse cx="833.5" cy="801.7" rx="0.9" ry="0.8" fill="#16261d" /><polygon points="830.4,791.5 835.0,792.3 836.6,789.5 832.0,788.7" fill="#2a1f1a" stroke="#15110f" stroke-width="0.7" stroke-linejoin="round" /><defs><g id="sw"><polygon points="869.68,789.90 872.67,770.85 895.45,732.39 894.70,747.70" fill="#4b4944" stroke="#141414" stroke-width="0.8" stroke-linejoin="round" /><polygon points="802.47,762.26 806.20,778.69 869.68,790.12 873.04,770.85" fill="#45433e" stroke="#141414" stroke-width="0.8" stroke-linejoin="round" /><polygon points="811.06,764.88 824.13,766.74 824.50,779.07 812.18,776.83" fill="#6f6c63" stroke="#141414" stroke-width="0.6" stroke-linejoin="round" /><polygon points="830.10,767.86 842.80,770.10 842.80,779.81 830.85,777.95" fill="#66635b" stroke="#141414" stroke-width="0.6" stroke-linejoin="round" /><polygon points="850.27,770.10 864.45,772.35 863.71,786.53 850.64,783.92" fill="#6f6c63" stroke="#141414" stroke-width="0.6" stroke-linejoin="round" /><polygon points="864.83,772.35 872.67,771.22 869.68,789.90 864.08,786.53" fill="#7b786e" stroke="#141414" stroke-width="0.6" stroke-linejoin="round" /><polyline points="811.06,772.35 824.50,774.59" fill="none" stroke="#141414" stroke-width="0.6" /><polyline points="850.64,776.83 864.08,779.44" fill="none" stroke="#141414" stroke-width="0.6" /><polygon points="824.50,761.89 827.86,762.49 827.49,778.69 824.87,778.32" fill="#7d7a70" stroke="#141414" stroke-width="0.6" stroke-linejoin="round" /><polygon points="846.53,766.37 849.89,766.97 850.27,782.80 847.65,782.43" fill="#8f8b80" stroke="#141414" stroke-width="0.6" stroke-linejoin="round" /><polygon points="875.28,766.03 898.44,723.98 901.05,727.71 876.40,770.13" fill="#8c887c" stroke="#141414" stroke-width="0.8" stroke-linejoin="round" /><polygon points="797.09,753.93 875.28,765.88 876.40,770.13 799.11,760.58" fill="#8c887c" stroke="#141414" stroke-width="0.8" stroke-linejoin="round" /><polygon points="797.99,754.38 821.14,758.11 821.29,763.94 799.48,760.35" fill="#9b978a" stroke="#141414" stroke-width="0.6" stroke-linejoin="round" /><polygon points="895.82,722.86 899.56,723.98 901.05,728.09 898.06,734.06 895.45,733.32" fill="#9b978a" stroke="#141414" stroke-width="0.7" stroke-linejoin="round" /><polygon points="865.20,731.82 880.88,708.30 899.18,725.10 874.16,765.80" fill="#a39f92" stroke="#141414" stroke-width="0.9" stroke-linejoin="round" /><polygon points="866.10,733.32 878.27,749.75 873.04,757.59 863.33,756.09" fill="#77746a" stroke="#141414" stroke-width="0.7" stroke-linejoin="round" /><polygon points="868.56,737.80 875.28,749.00 871.92,754.23 866.70,753.48" fill="#9b978a" stroke="#141414" stroke-width="0.6" stroke-linejoin="round" /><polygon points="884.25,721.37 891.34,719.87 891.71,728.83 887.61,730.70" fill="#615e56" stroke="#141414" stroke-width="0.7" stroke-linejoin="round" /><polyline points="871.92,730.33 877.90,719.87" fill="none" stroke="#141414" stroke-width="0.6" /><polygon points="817.40,724.73 865.20,731.82 874.16,765.80 797.61,753.85" fill="#9b978a" stroke="#141414" stroke-width="0.9" stroke-linejoin="round" /><polygon points="817.40,724.73 814.57,749.15 797.84,753.70" fill="#5a574f" stroke="#141414" stroke-width="0.7" stroke-linejoin="round" /><polygon points="811.06,737.80 814.04,738.54 812.92,746.76 806.20,747.51" fill="#2f2d2a" /><polygon points="820.02,726.00 862.21,732.72 859.97,750.12 857.73,756.84 816.66,749.00" fill="#5d5a53" stroke="#141414" stroke-width="0.8" stroke-linejoin="round" /><polygon points="822.04,727.34 835.93,729.43 834.73,743.92 820.77,741.68" fill="#7b786e" stroke="#141414" stroke-width="0.6" stroke-linejoin="round" /><polygon points="847.28,731.82 860.87,734.06 859.38,749.15 847.28,746.91" fill="#7b786e" stroke="#141414" stroke-width="0.6" stroke-linejoin="round" /><polygon points="820.02,742.28 834.73,744.52 831.00,752.14 816.81,749.15" fill="#a39f92" stroke="#141414" stroke-width="0.6" stroke-linejoin="round" /><polygon points="847.28,747.13 859.38,749.37 857.73,756.62 844.44,754.38" fill="#a39f92" stroke="#141414" stroke-width="0.6" stroke-linejoin="round" /><polygon points="835.93,728.98 847.28,730.93 847.43,747.51 846.53,750.49 833.83,747.88 835.70,742.65" fill="#7f7c72" stroke="#141414" stroke-width="0.7" stroke-linejoin="round" /><path d="M830.70 749.75Q839.81 742.28 848.92 751.99L842.80 755.72 842.80 759.83 831.59 758.11Z" fill="#9b978a" stroke="#141414" stroke-width="0.8" stroke-linejoin="round" /><path d="M833.83 749.75Q839.81 745.64 846.53 750.87Q839.81 749.00 833.83 749.75Z" fill="#615e56" stroke="#141414" stroke-width="0.6" stroke-linejoin="round" /><polygon points="831.97,753.48 842.80,755.12 842.80,759.60 831.74,757.81" fill="#a39f92" stroke="#141414" stroke-width="0.7" stroke-linejoin="round" /><polygon points="831.59,700.08 880.88,708.30 865.20,731.82 817.40,724.73" fill="#9b978a" stroke="#141414" stroke-width="0.9" stroke-linejoin="round" /><polygon points="824.50,722.26 834.43,704.94 873.04,711.51 861.84,728.46" fill="#3c3a36" /><polygon points="826.22,721.22 835.33,705.83 869.68,711.66 859.38,726.97" fill="#e6e7f8" stroke="#141414" stroke-width="0.6" stroke-linejoin="round" /><polygon points="859.38,726.97 869.68,711.66 872.30,712.11 861.69,727.79" fill="#a3a6c2" stroke="#141414" stroke-width="0.5" stroke-linejoin="round" /><polygon points="825.25,721.96 826.22,721.22 859.38,726.97 861.69,727.79 861.09,728.83" fill="#cfd1ea" stroke="#141414" stroke-width="0.5" stroke-linejoin="round" /><polygon points="852.72,693.96 848.75,693.28 848.75,707.32 852.72,708.01" fill="#565869" stroke="#141414" stroke-width="0.55" stroke-linejoin="round" /><polygon points="848.75,693.28 846.31,697.47 846.31,711.51 848.75,707.32" fill="#565869" stroke="#141414" stroke-width="0.55" stroke-linejoin="round" /><polygon points="850.28,698.16 852.72,693.96 852.72,708.01 850.28,712.20" fill="#a3a6c2" stroke="#141414" stroke-width="0.55" stroke-linejoin="round" /><polygon points="846.31,697.47 838.88,696.19 838.88,710.23 846.31,711.51" fill="#565869" stroke="#141414" stroke-width="0.55" stroke-linejoin="round" /><polygon points="857.71,699.44 850.28,698.16 850.28,712.20 857.71,713.48" fill="#565869" stroke="#141414" stroke-width="0.55" stroke-linejoin="round" /><polygon points="838.88,696.19 836.85,699.68 836.85,713.72 838.88,710.23" fill="#565869" stroke="#141414" stroke-width="0.55" stroke-linejoin="round" /><polygon points="855.68,702.93 857.71,699.44 857.71,713.48 855.68,716.97" fill="#a3a6c2" stroke="#141414" stroke-width="0.55" stroke-linejoin="round" /><polygon points="836.85,699.68 844.28,700.96 844.28,715.00 836.85,713.72" fill="#e6e7f8" stroke="#141414" stroke-width="0.55" stroke-linejoin="round" /><polygon points="848.25,701.64 855.68,702.93 855.68,716.97 848.25,715.68" fill="#e6e7f8" stroke="#141414" stroke-width="0.55" stroke-linejoin="round" /><polygon points="844.28,700.96 841.83,705.15 841.83,719.19 844.28,715.00" fill="#565869" stroke="#141414" stroke-width="0.55" stroke-linejoin="round" /><polygon points="845.81,705.84 848.25,701.64 848.25,715.68 845.81,719.88" fill="#a3a6c2" stroke="#141414" stroke-width="0.55" stroke-linejoin="round" /><polygon points="841.83,705.15 845.81,705.84 845.81,719.88 841.83,719.19" fill="#cfd1ea" stroke="#141414" stroke-width="0.55" stroke-linejoin="round" /><polygon points="836.85,699.68 844.28,700.96 841.83,705.15 845.81,705.84 848.25,701.64 855.68,702.93 857.71,699.44 850.28,698.16 852.72,693.96 848.75,693.28 846.31,697.47 838.88,696.19" fill="#f2f2fd" stroke="#141414" stroke-width="0.55" stroke-linejoin="round" /></g></defs><use href="#sw" x="199.0" y="-338.5"/><use href="#sw" x="159.2" y="-270.8"/><use href="#sw" x="119.4" y="-203.1"/><use href="#sw" x="79.6" y="-135.4"/><use href="#sw" x="39.8" y="-67.7"/><use href="#sw" x="0.0" y="-0.0"/></g>
</svg>
<svg class="abs" style="left:0;top:0" width="1920" height="843" viewBox="56 181 1920 843"><defs><filter id="vcb" x="-40%" y="-40%" width="180%" height="180%"><feGaussianBlur stdDeviation="4"/></filter></defs><g filter="url(#vcb)"><polygon points="1885.57,277.43 1930.38,287.27 1945.68,266.50 1918.36,259.95" fill="#000" opacity="0.2"/></g><polygon points="1879.89,232.08 1898.14,212.95 1941.31,218.96 1929.29,239.73" fill="#ebebeb" opacity="0.8"/><polygon points="1929.29,239.73 1941.31,218.96 1940.22,257.76 1928.20,282.90" fill="#dcdcdc" opacity="0.8"/><polygon points="1879.89,232.08 1929.29,239.73 1928.20,282.90 1882.30,274.70" fill="#e6e6e6" opacity="0.82"/><polygon points="1888.31,230.44 1922.73,234.81 1920.00,246.83 1888.31,241.37" fill="#dde3ea" opacity="0.8"/><polyline points="1879.89,232.08 1898.14,212.95 1941.31,218.96 1929.29,239.73 1879.89,232.08" fill="none" stroke="#9a9a9a" stroke-width="0.8" stroke-dasharray="3 1.6"/><polyline points="1941.31,218.96 1940.22,257.76 1928.20,282.90 1929.29,239.73" fill="none" stroke="#9a9a9a" stroke-width="0.8" stroke-dasharray="3 1.6"/><polyline points="1877.70,224.97 1882.30,274.70" fill="none" stroke="#4a4af0" stroke-width="1.6" /><polyline points="1882.30,275.03 1936.39,287.05" fill="none" stroke="#f07070" stroke-width="1.6" /><text transform="translate(1904.7 261.3) rotate(9)" text-anchor="middle" font-family="'DejaVu Sans','Liberation Sans',sans-serif" font-size="10.8" fill="#858b93" stroke="#858b93" stroke-width="0.3">VORNE</text><text transform="translate(1912.9 227.7) rotate(9) skewX(-40) scale(1 0.5)" text-anchor="middle" font-family="'DejaVu Sans','Liberation Sans',sans-serif" font-size="10" fill="#8a8f96" stroke="#8a8f96" stroke-width="0.3">OBEN</text><text x="1876.8" y="220.4" text-anchor="middle" font-family="'DejaVu Sans','Liberation Sans',sans-serif" font-size="12" fill="#5050ee">Z</text><text x="1943.3" y="293.0" text-anchor="middle" font-family="'DejaVu Sans','Liberation Sans',sans-serif" font-size="12" fill="#f36b6b">X</text></svg>
<div class="abs" style="left:8px;top:36px;width:6px;height:528px;background:#c9c9cc"></div>
<div class="abs" style="left:8px;top:564px;width:6px;height:226px;background:#9b9b9b;border-radius:0 0 3px 3px"></div>
<div class="ph" style="top:6px"><span id="phb" style="letter-spacing:-0.241px;">BROWSER</span></div>
<svg class="abs" style="left:8px;top:13px" width="12" height="10" viewBox="0 0 12 10"><path d="M5.2 1.6v6.8L0.6 5zM10.6 1.6v6.8L6 5z" fill="#222"/></svg>
<div class="abs" style="left:282.8px;top:13.800000000000011px;width:9px;height:9px;border-radius:50%;background:#1a1a1a"></div>
<div class="abs" style="left:284.6px;top:17.600000000000012px;width:5.4px;height:1.4px;background:#fff"></div>
<div class="row" id="f0" style="left:58px;top:36px;width:114px"><span id="ft0" style="left:33.5px;letter-spacing:0.079px;">Extrusion377</span><svg class="abs" style="left:0;top:0" width="46" height="20" viewBox="0 0 46 20"><polygon points="3.98,15.75 12.77,15.75 15.50,12.82 15.50,14.50 12.77,17.64 3.98,17.64" fill="#b9b9b9" /><polygon points="12.77,15.75 15.50,12.82 15.50,14.50 12.77,17.64" fill="#d6d6d6" /><polygon points="3.98,5.28 12.77,5.28 12.77,15.75 3.98,15.75" fill="#6cb2e8" /><polygon points="3.98,5.28 6.70,2.14 15.50,2.14 12.77,5.28" fill="#8ccbf8" /><polygon points="12.77,5.28 15.50,2.14 15.50,12.82 12.77,15.75" fill="#4a94d0" /><polyline points="17.38,14.71 17.38,4.03" fill="none" stroke="#111" stroke-width="1.1" /><polygon points="17.38,2.69 18.76,4.86 16.00,4.86" fill="#111" /></svg></div>
<div class="row" id="f1" style="left:58px;top:60px;width:118px"><span id="ft1" style="left:33.5px;letter-spacing:0.091px;">Abrunden378</span><svg class="abs" style="left:0;top:0" width="46" height="20" viewBox="0 0 46 20"><path d="M14.66 12.70L18.64 9.76 18.64 14.16 14.66 17.72Z" fill="#c4c4c4" /><path d="M3.43 6.20L9.63 6.20Q14.66 7.25 14.66 12.70L14.66 17.72 3.43 17.72Z" fill="#dadada" /><path d="M3.43 6.20L7.12 2.43 11.31 2.43 9.00 5.79Z" fill="#f6f6f6" /><path d="M9.00 5.79L11.81 2.23Q18.64 3.48 18.85 9.76L16.12 12.07Q15.50 6.83 9.00 5.79Z" fill="#5aaae6" /><polyline points="3.14,17.81 3.14,6.20 7.12,2.43 11.10,2.43" fill="none" stroke="#333" stroke-width="1.1" /></svg></div>
<div class="row" id="f2" style="left:58px;top:84px;width:118px"><span id="ft2" style="left:33.5px;letter-spacing:0.091px;">Abrunden379</span><svg class="abs" style="left:0;top:0" width="46" height="20" viewBox="0 0 46 20"><path d="M14.66 12.70L18.64 9.76 18.64 14.16 14.66 17.72Z" fill="#c4c4c4" /><path d="M3.43 6.20L9.63 6.20Q14.66 7.25 14.66 12.70L14.66 17.72 3.43 17.72Z" fill="#dadada" /><path d="M3.43 6.20L7.12 2.43 11.31 2.43 9.00 5.79Z" fill="#f6f6f6" /><path d="M9.00 5.79L11.81 2.23Q18.64 3.48 18.85 9.76L16.12 12.07Q15.50 6.83 9.00 5.79Z" fill="#5aaae6" /><polyline points="3.14,17.81 3.14,6.20 7.12,2.43 11.10,2.43" fill="none" stroke="#333" stroke-width="1.1" /></svg></div>
<div class="row" id="f3" style="left:58px;top:108px;width:114px"><span id="ft3" style="left:33.5px;letter-spacing:0.079px;">Extrusion380</span><svg class="abs" style="left:0;top:0" width="46" height="20" viewBox="0 0 46 20"><polygon points="3.98,15.75 12.77,15.75 15.50,12.82 15.50,14.50 12.77,17.64 3.98,17.64" fill="#b9b9b9" /><polygon points="12.77,15.75 15.50,12.82 15.50,14.50 12.77,17.64" fill="#d6d6d6" /><polygon points="3.98,5.28 12.77,5.28 12.77,15.75 3.98,15.75" fill="#6cb2e8" /><polygon points="3.98,5.28 6.70,2.14 15.50,2.14 12.77,5.28" fill="#8ccbf8" /><polygon points="12.77,5.28 15.50,2.14 15.50,12.82 12.77,15.75" fill="#4a94d0" /><polyline points="17.38,14.71 17.38,4.03" fill="none" stroke="#111" stroke-width="1.1" /><polygon points="17.38,2.69 18.76,4.86 16.00,4.86" fill="#111" /></svg></div>
<div class="row" id="f4" style="left:58px;top:132px;width:118px"><span id="ft4" style="left:33.5px;letter-spacing:0.091px;">Abrunden381</span><svg class="abs" style="left:0;top:0" width="46" height="20" viewBox="0 0 46 20"><path d="M14.66 12.70L18.64 9.76 18.64 14.16 14.66 17.72Z" fill="#c4c4c4" /><path d="M3.43 6.20L9.63 6.20Q14.66 7.25 14.66 12.70L14.66 17.72 3.43 17.72Z" fill="#dadada" /><path d="M3.43 6.20L7.12 2.43 11.31 2.43 9.00 5.79Z" fill="#f6f6f6" /><path d="M9.00 5.79L11.81 2.23Q18.64 3.48 18.85 9.76L16.12 12.07Q15.50 6.83 9.00 5.79Z" fill="#5aaae6" /><polyline points="3.14,17.81 3.14,6.20 7.12,2.43 11.10,2.43" fill="none" stroke="#333" stroke-width="1.1" /></svg></div>
<div class="row" id="f5" style="left:58px;top:156px;width:114px"><span id="ft5" style="left:33.5px;letter-spacing:0.079px;">Extrusion382</span><svg class="abs" style="left:0;top:0" width="46" height="20" viewBox="0 0 46 20"><polygon points="3.98,15.75 12.77,15.75 15.50,12.82 15.50,14.50 12.77,17.64 3.98,17.64" fill="#b9b9b9" /><polygon points="12.77,15.75 15.50,12.82 15.50,14.50 12.77,17.64" fill="#d6d6d6" /><polygon points="3.98,5.28 12.77,5.28 12.77,15.75 3.98,15.75" fill="#6cb2e8" /><polygon points="3.98,5.28 6.70,2.14 15.50,2.14 12.77,5.28" fill="#8ccbf8" /><polygon points="12.77,5.28 15.50,2.14 15.50,12.82 12.77,15.75" fill="#4a94d0" /><polyline points="17.38,14.71 17.38,4.03" fill="none" stroke="#111" stroke-width="1.1" /><polygon points="17.38,2.69 18.76,4.86 16.00,4.86" fill="#111" /></svg></div>
<div class="row" id="f6" style="left:58px;top:180px;width:118px"><span id="ft6" style="left:33.5px;letter-spacing:0.091px;">Abrunden383</span><svg class="abs" style="left:0;top:0" width="46" height="20" viewBox="0 0 46 20"><path d="M14.66 12.70L18.64 9.76 18.64 14.16 14.66 17.72Z" fill="#c4c4c4" /><path d="M3.43 6.20L9.63 6.20Q14.66 7.25 14.66 12.70L14.66 17.72 3.43 17.72Z" fill="#dadada" /><path d="M3.43 6.20L7.12 2.43 11.31 2.43 9.00 5.79Z" fill="#f6f6f6" /><path d="M9.00 5.79L11.81 2.23Q18.64 3.48 18.85 9.76L16.12 12.07Q15.50 6.83 9.00 5.79Z" fill="#5aaae6" /><polyline points="3.14,17.81 3.14,6.20 7.12,2.43 11.10,2.43" fill="none" stroke="#333" stroke-width="1.1" /></svg></div>
<div class="row" id="f7" style="left:58px;top:204px;width:114px"><span id="ft7" style="left:33.5px;letter-spacing:0.079px;">Extrusion384</span><svg class="abs" style="left:0;top:0" width="46" height="20" viewBox="0 0 46 20"><polygon points="3.98,15.75 12.77,15.75 15.50,12.82 15.50,14.50 12.77,17.64 3.98,17.64" fill="#b9b9b9" /><polygon points="12.77,15.75 15.50,12.82 15.50,14.50 12.77,17.64" fill="#d6d6d6" /><polygon points="3.98,5.28 12.77,5.28 12.77,15.75 3.98,15.75" fill="#6cb2e8" /><polygon points="3.98,5.28 6.70,2.14 15.50,2.14 12.77,5.28" fill="#8ccbf8" /><polygon points="12.77,5.28 15.50,2.14 15.50,12.82 12.77,15.75" fill="#4a94d0" /><polyline points="17.38,14.71 17.38,4.03" fill="none" stroke="#111" stroke-width="1.1" /><polygon points="17.38,2.69 18.76,4.86 16.00,4.86" fill="#111" /></svg></div>
<div class="row" id="f8" style="left:58px;top:228px;width:114px"><span id="ft8" style="left:33.5px;letter-spacing:0.079px;">Extrusion385</span><svg class="abs" style="left:0;top:0" width="46" height="20" viewBox="0 0 46 20"><polygon points="3.98,15.75 12.77,15.75 15.50,12.82 15.50,14.50 12.77,17.64 3.98,17.64" fill="#b9b9b9" /><polygon points="12.77,15.75 15.50,12.82 15.50,14.50 12.77,17.64" fill="#d6d6d6" /><polygon points="3.98,5.28 12.77,5.28 12.77,15.75 3.98,15.75" fill="#6cb2e8" /><polygon points="3.98,5.28 6.70,2.14 15.50,2.14 12.77,5.28" fill="#8ccbf8" /><polygon points="12.77,5.28 15.50,2.14 15.50,12.82 12.77,15.75" fill="#4a94d0" /><polyline points="17.38,14.71 17.38,4.03" fill="none" stroke="#111" stroke-width="1.1" /><polygon points="17.38,2.69 18.76,4.86 16.00,4.86" fill="#111" /></svg></div>
<div class="row" id="c0" style="left:58px;top:252px;width:103.0px"><span id="ct0" style="left:58.5px;letter-spacing:-0.145px;">back:1</span><svg class="abs" style="left:0;top:0" width="46" height="20" viewBox="0 0 46 20"><path d="M2.93 10.31Q10.89 1.93 18.85 10.31Q10.89 18.69 2.93 10.31Z" fill="none" stroke="#808080" stroke-width="0.85" stroke-linejoin="round" /><circle cx="10.89" cy="10.31" r="3.02" fill="none" stroke="#808080" stroke-width="0.85" /><polyline points="5.78,5.28 15.71,15.25" fill="none" stroke="#f2f2f2" stroke-width="2.2" /><polyline points="5.95,5.20 15.71,15.13" fill="none" stroke="#808080" stroke-width="0.9" /></svg><svg class="abs" style="left:0;top:0" width="46" height="20" viewBox="0 0 46 20"><polygon points="30.16,8.01 40.21,8.01 40.21,17.64 30.16,17.64" fill="#dcdcdc" /><polygon points="40.21,8.01 43.77,4.24 43.77,13.66 40.21,17.64" fill="#bdbdbd" /><polygon points="30.16,8.01 34.14,4.24 43.77,4.24 40.21,8.01" fill="#f0f0f0" /><polyline points="30.16,11.15 30.16,17.64 40.21,17.64 43.77,13.66 43.77,4.24 34.14,4.24" fill="none" stroke="#3a3a3a" stroke-width="1.2" /><rect x="27.22" y="1.51" width="7.75" height="8.80" fill="#f2f2f2" /><circle cx="31.62" cy="3.27" r="0.71" fill="none" stroke="#111" stroke-width="0.9" /><polyline points="31.62,4.03 31.62,9.05" fill="none" stroke="#111" stroke-width="1.2" /><polyline points="30.03,5.28 33.21,5.28" fill="none" stroke="#111" stroke-width="1" /><path d="M28.48 6.62Q29.32 9.14 31.62 9.05Q33.93 9.14 34.76 6.62" fill="none" stroke="#111" stroke-width="1.2" stroke-linejoin="round" /><circle cx="28.27" cy="7.25" r="0.50" fill="#111" /></svg></div>
<svg class="abs" style="left:40.2px;top:256.6px" width="9" height="12" viewBox="0 0 9 12"><path d="M1.5 1.1L6.5 5.4L1.5 9.700z" fill="none" stroke="#000" stroke-width="1.15" stroke-linejoin="miter"/></svg>
<div class="row" id="c1" style="left:58px;top:276px;width:103.0px"><span id="ct1" style="left:58.5px;letter-spacing:-0.084px;">right:1</span><svg class="abs" style="left:0;top:0" width="46" height="20" viewBox="0 0 46 20"><path d="M2.93 10.31Q10.89 1.93 18.85 10.31Q10.89 18.69 2.93 10.31Z" fill="none" stroke="#808080" stroke-width="0.85" stroke-linejoin="round" /><circle cx="10.89" cy="10.31" r="3.02" fill="none" stroke="#808080" stroke-width="0.85" /><polyline points="5.78,5.28 15.71,15.25" fill="none" stroke="#f2f2f2" stroke-width="2.2" /><polyline points="5.95,5.20 15.71,15.13" fill="none" stroke="#808080" stroke-width="0.9" /></svg><svg class="abs" style="left:0;top:0" width="46" height="20" viewBox="0 0 46 20"><defs><linearGradient id="cg" x1="0" y1="0" x2="0" y2="1"><stop offset="0" stop-color="#dde1ea"/><stop offset="1" stop-color="#b3bccd"/></linearGradient></defs><polygon points="29.74,6.20 39.79,6.20 39.79,15.21 29.74,15.21" fill="url(#cg)" /><polygon points="39.79,6.20 42.72,3.27 42.72,12.28 39.79,15.21" fill="#9fb0c6" /><polyline points="29.74,6.08 32.67,3.15" fill="none" stroke="#333" stroke-width="0.9" /><polyline points="29.65,15.46 39.87,15.46 42.72,12.36 42.72,3.15" fill="none" stroke="#2a2a2a" stroke-width="1.5" /></svg></div>
<svg class="abs" style="left:40.2px;top:280.6px" width="9" height="12" viewBox="0 0 9 12"><path d="M1.5 1.1L6.5 5.4L1.5 9.700z" fill="none" stroke="#000" stroke-width="1.15" stroke-linejoin="miter"/></svg>
<div class="row" id="c2" style="left:58px;top:300px;width:94.6px"><span id="ct2" style="left:58.5px;letter-spacing:-0.172px;">left:1</span><svg class="abs" style="left:0;top:0" width="46" height="20" viewBox="0 0 46 20"><path d="M2.93 10.31Q10.89 1.93 18.85 10.31Q10.89 18.69 2.93 10.31Z" fill="none" stroke="#808080" stroke-width="0.85" stroke-linejoin="round" /><circle cx="10.89" cy="10.31" r="3.02" fill="none" stroke="#808080" stroke-width="0.85" /><polyline points="5.78,5.28 15.71,15.25" fill="none" stroke="#f2f2f2" stroke-width="2.2" /><polyline points="5.95,5.20 15.71,15.13" fill="none" stroke="#808080" stroke-width="0.9" /></svg><svg class="abs" style="left:0;top:0" width="46" height="20" viewBox="0 0 46 20"><defs><linearGradient id="cg" x1="0" y1="0" x2="0" y2="1"><stop offset="0" stop-color="#dde1ea"/><stop offset="1" stop-color="#b3bccd"/></linearGradient></defs><polygon points="29.74,6.20 39.79,6.20 39.79,15.21 29.74,15.21" fill="url(#cg)" /><polygon points="39.79,6.20 42.72,3.27 42.72,12.28 39.79,15.21" fill="#9fb0c6" /><polyline points="29.74,6.08 32.67,3.15" fill="none" stroke="#333" stroke-width="0.9" /><polyline points="29.65,15.46 39.87,15.46 42.72,12.36 42.72,3.15" fill="none" stroke="#2a2a2a" stroke-width="1.5" /></svg></div>
<svg class="abs" style="left:40.2px;top:304.6px" width="9" height="12" viewBox="0 0 9 12"><path d="M1.5 1.1L6.5 5.4L1.5 9.700z" fill="none" stroke="#000" stroke-width="1.15" stroke-linejoin="miter"/></svg>
<div class="row" id="c3" style="left:58px;top:324px;width:146.7px"><span id="ct3" style="left:58.5px;letter-spacing:0.187px;">extend-right:1</span><svg class="abs" style="left:0;top:0" width="46" height="20" viewBox="0 0 46 20"><path d="M2.93 10.31Q10.89 1.93 18.85 10.31Q10.89 18.69 2.93 10.31Z" fill="none" stroke="#808080" stroke-width="0.85" stroke-linejoin="round" /><circle cx="10.89" cy="10.31" r="3.02" fill="none" stroke="#808080" stroke-width="0.85" /><polyline points="5.78,5.28 15.71,15.25" fill="none" stroke="#f2f2f2" stroke-width="2.2" /><polyline points="5.95,5.20 15.71,15.13" fill="none" stroke="#808080" stroke-width="0.9" /></svg><svg class="abs" style="left:0;top:0" width="46" height="20" viewBox="0 0 46 20"><defs><linearGradient id="cg" x1="0" y1="0" x2="0" y2="1"><stop offset="0" stop-color="#dde1ea"/><stop offset="1" stop-color="#b3bccd"/></linearGradient></defs><polygon points="29.74,6.20 39.79,6.20 39.79,15.21 29.74,15.21" fill="url(#cg)" /><polygon points="39.79,6.20 42.72,3.27 42.72,12.28 39.79,15.21" fill="#9fb0c6" /><polyline points="29.74,6.08 32.67,3.15" fill="none" stroke="#333" stroke-width="0.9" /><polyline points="29.65,15.46 39.87,15.46 42.72,12.36 42.72,3.15" fill="none" stroke="#2a2a2a" stroke-width="1.5" /></svg></div>
<svg class="abs" style="left:40.2px;top:328.6px" width="9" height="12" viewBox="0 0 9 12"><path d="M1.5 1.1L6.5 5.4L1.5 9.700z" fill="none" stroke="#000" stroke-width="1.15" stroke-linejoin="miter"/></svg>
<div class="row" id="c4" style="left:58px;top:348px;width:138.8px"><span id="ct4" style="left:58.5px;letter-spacing:0.146px;">extend-left:1</span><svg class="abs" style="left:0;top:0" width="46" height="20" viewBox="0 0 46 20"><path d="M2.93 10.31Q10.89 1.93 18.85 10.31Q10.89 18.69 2.93 10.31Z" fill="none" stroke="#808080" stroke-width="0.85" stroke-linejoin="round" /><circle cx="10.89" cy="10.31" r="3.02" fill="none" stroke="#808080" stroke-width="0.85" /><polyline points="5.78,5.28 15.71,15.25" fill="none" stroke="#f2f2f2" stroke-width="2.2" /><polyline points="5.95,5.20 15.71,15.13" fill="none" stroke="#808080" stroke-width="0.9" /></svg><svg class="abs" style="left:0;top:0" width="46" height="20" viewBox="0 0 46 20"><defs><linearGradient id="cg" x1="0" y1="0" x2="0" y2="1"><stop offset="0" stop-color="#dde1ea"/><stop offset="1" stop-color="#b3bccd"/></linearGradient></defs><polygon points="29.74,6.20 39.79,6.20 39.79,15.21 29.74,15.21" fill="url(#cg)" /><polygon points="39.79,6.20 42.72,3.27 42.72,12.28 39.79,15.21" fill="#9fb0c6" /><polyline points="29.74,6.08 32.67,3.15" fill="none" stroke="#333" stroke-width="0.9" /><polyline points="29.65,15.46 39.87,15.46 42.72,12.36 42.72,3.15" fill="none" stroke="#2a2a2a" stroke-width="1.5" /></svg></div>
<svg class="abs" style="left:40.2px;top:352.6px" width="9" height="12" viewBox="0 0 9 12"><path d="M1.5 1.1L6.5 5.4L1.5 9.700z" fill="none" stroke="#000" stroke-width="1.15" stroke-linejoin="miter"/></svg>
<div class="row" id="c5" style="left:58px;top:372px;width:103.0px"><span id="ct5" style="left:58.5px;letter-spacing:-0.292px;">base:1</span><svg class="abs" style="left:0;top:0" width="46" height="20" viewBox="0 0 46 20"><path d="M2.93 10.31Q10.89 1.93 18.85 10.31Q10.89 18.69 2.93 10.31Z" fill="none" stroke="#808080" stroke-width="0.85" stroke-linejoin="round" /><circle cx="10.89" cy="10.31" r="3.02" fill="none" stroke="#808080" stroke-width="0.85" /><polyline points="5.78,5.28 15.71,15.25" fill="none" stroke="#f2f2f2" stroke-width="2.2" /><polyline points="5.95,5.20 15.71,15.13" fill="none" stroke="#808080" stroke-width="0.9" /></svg><svg class="abs" style="left:0;top:0" width="46" height="20" viewBox="0 0 46 20"><defs><linearGradient id="cg" x1="0" y1="0" x2="0" y2="1"><stop offset="0" stop-color="#dde1ea"/><stop offset="1" stop-color="#b3bccd"/></linearGradient></defs><polygon points="29.74,6.20 39.79,6.20 39.79,15.21 29.74,15.21" fill="url(#cg)" /><polygon points="39.79,6.20 42.72,3.27 42.72,12.28 39.79,15.21" fill="#9fb0c6" /><polyline points="29.74,6.08 32.67,3.15" fill="none" stroke="#333" stroke-width="0.9" /><polyline points="29.65,15.46 39.87,15.46 42.72,12.36 42.72,3.15" fill="none" stroke="#2a2a2a" stroke-width="1.5" /></svg></div>
<svg class="abs" style="left:40.2px;top:376.6px" width="9" height="12" viewBox="0 0 9 12"><path d="M1.5 1.1L6.5 5.4L1.5 9.700z" fill="none" stroke="#000" stroke-width="1.15" stroke-linejoin="miter"/></svg>
<div class="row" id="c6" style="left:58px;top:396px;width:206.9px"><span id="ct6" style="left:58.5px;letter-spacing:0.349px;">front-3dprint-rounding:1</span><svg class="abs" style="left:0;top:0" width="46" height="20" viewBox="0 0 46 20"><path d="M2.93 10.31Q10.89 1.93 18.85 10.31Q10.89 18.69 2.93 10.31Z" fill="none" stroke="#808080" stroke-width="0.85" stroke-linejoin="round" /><circle cx="10.89" cy="10.31" r="3.02" fill="none" stroke="#808080" stroke-width="0.85" /><polyline points="5.78,5.28 15.71,15.25" fill="none" stroke="#f2f2f2" stroke-width="2.2" /><polyline points="5.95,5.20 15.71,15.13" fill="none" stroke="#808080" stroke-width="0.9" /></svg><svg class="abs" style="left:0;top:0" width="46" height="20" viewBox="0 0 46 20"><defs><linearGradient id="cg" x1="0" y1="0" x2="0" y2="1"><stop offset="0" stop-color="#dde1ea"/><stop offset="1" stop-color="#b3bccd"/></linearGradient></defs><polygon points="29.74,6.20 39.79,6.20 39.79,15.21 29.74,15.21" fill="url(#cg)" /><polygon points="39.79,6.20 42.72,3.27 42.72,12.28 39.79,15.21" fill="#9fb0c6" /><polyline points="29.74,6.08 32.67,3.15" fill="none" stroke="#333" stroke-width="0.9" /><polyline points="29.65,15.46 39.87,15.46 42.72,12.36 42.72,3.15" fill="none" stroke="#2a2a2a" stroke-width="1.5" /></svg></div>
<svg class="abs" style="left:40.2px;top:400.6px" width="9" height="12" viewBox="0 0 9 12"><path d="M1.5 1.1L6.5 5.4L1.5 9.700z" fill="none" stroke="#000" stroke-width="1.15" stroke-linejoin="miter"/></svg>
<div class="row" id="c7" style="left:58px;top:420px;width:114.5px"><span id="ct7" style="left:58.5px;letter-spacing:0.257px;">top-up:1</span><svg class="abs" style="left:0;top:0" width="46" height="20" viewBox="0 0 46 20"><path d="M2.93 10.31Q10.89 1.93 18.85 10.31Q10.89 18.69 2.93 10.31Z" fill="none" stroke="#808080" stroke-width="0.85" stroke-linejoin="round" /><circle cx="10.89" cy="10.31" r="3.02" fill="none" stroke="#808080" stroke-width="0.85" /><polyline points="5.78,5.28 15.71,15.25" fill="none" stroke="#f2f2f2" stroke-width="2.2" /><polyline points="5.95,5.20 15.71,15.13" fill="none" stroke="#808080" stroke-width="0.9" /></svg><svg class="abs" style="left:0;top:0" width="46" height="20" viewBox="0 0 46 20"><defs><linearGradient id="cg" x1="0" y1="0" x2="0" y2="1"><stop offset="0" stop-color="#dde1ea"/><stop offset="1" stop-color="#b3bccd"/></linearGradient></defs><polygon points="29.74,6.20 39.79,6.20 39.79,15.21 29.74,15.21" fill="url(#cg)" /><polygon points="39.79,6.20 42.72,3.27 42.72,12.28 39.79,15.21" fill="#9fb0c6" /><polyline points="29.74,6.08 32.67,3.15" fill="none" stroke="#333" stroke-width="0.9" /><polyline points="29.65,15.46 39.87,15.46 42.72,12.36 42.72,3.15" fill="none" stroke="#2a2a2a" stroke-width="1.5" /></svg></div>
<svg class="abs" style="left:40.2px;top:424.6px" width="9" height="12" viewBox="0 0 9 12"><path d="M1.5 1.1L6.5 5.4L1.5 9.700z" fill="none" stroke="#000" stroke-width="1.15" stroke-linejoin="miter"/></svg>
<div class="row" id="c8" style="left:58px;top:444px;width:131.1px"><span id="ct8" style="left:58.5px;letter-spacing:0.255px;">top-down:1</span><svg class="abs" style="left:0;top:0" width="46" height="20" viewBox="0 0 46 20"><path d="M2.93 10.31Q10.89 1.93 18.85 10.31Q10.89 18.69 2.93 10.31Z" fill="none" stroke="#808080" stroke-width="0.85" stroke-linejoin="round" /><circle cx="10.89" cy="10.31" r="3.02" fill="none" stroke="#808080" stroke-width="0.85" /><polyline points="5.78,5.28 15.71,15.25" fill="none" stroke="#f2f2f2" stroke-width="2.2" /><polyline points="5.95,5.20 15.71,15.13" fill="none" stroke="#808080" stroke-width="0.9" /></svg><svg class="abs" style="left:0;top:0" width="46" height="20" viewBox="0 0 46 20"><defs><linearGradient id="cg" x1="0" y1="0" x2="0" y2="1"><stop offset="0" stop-color="#dde1ea"/><stop offset="1" stop-color="#b3bccd"/></linearGradient></defs><polygon points="29.74,6.20 39.79,6.20 39.79,15.21 29.74,15.21" fill="url(#cg)" /><polygon points="39.79,6.20 42.72,3.27 42.72,12.28 39.79,15.21" fill="#9fb0c6" /><polyline points="29.74,6.08 32.67,3.15" fill="none" stroke="#333" stroke-width="0.9" /><polyline points="29.65,15.46 39.87,15.46 42.72,12.36 42.72,3.15" fill="none" stroke="#2a2a2a" stroke-width="1.5" /></svg></div>
<svg class="abs" style="left:40.2px;top:448.6px" width="9" height="12" viewBox="0 0 9 12"><path d="M1.5 1.1L6.5 5.4L1.5 9.700z" fill="none" stroke="#000" stroke-width="1.15" stroke-linejoin="miter"/></svg>
<div class="row" id="c9" style="left:58px;top:468px;width:134.4px"><span id="ct9" style="left:58.5px;letter-spacing:0.036px;">bildschirm:1</span><svg class="abs" style="left:0;top:0" width="46" height="20" viewBox="0 0 46 20"><path d="M2.93 10.31Q10.89 1.93 18.85 10.31Q10.89 18.69 2.93 10.31Z" fill="none" stroke="#808080" stroke-width="0.85" stroke-linejoin="round" /><circle cx="10.89" cy="10.31" r="3.02" fill="none" stroke="#808080" stroke-width="0.85" /><polyline points="5.78,5.28 15.71,15.25" fill="none" stroke="#f2f2f2" stroke-width="2.2" /><polyline points="5.95,5.20 15.71,15.13" fill="none" stroke="#808080" stroke-width="0.9" /></svg><svg class="abs" style="left:0;top:0" width="46" height="20" viewBox="0 0 46 20"><defs><linearGradient id="cg" x1="0" y1="0" x2="0" y2="1"><stop offset="0" stop-color="#dde1ea"/><stop offset="1" stop-color="#b3bccd"/></linearGradient></defs><polygon points="29.74,6.20 39.79,6.20 39.79,15.21 29.74,15.21" fill="url(#cg)" /><polygon points="39.79,6.20 42.72,3.27 42.72,12.28 39.79,15.21" fill="#9fb0c6" /><polyline points="29.74,6.08 32.67,3.15" fill="none" stroke="#333" stroke-width="0.9" /><polyline points="29.65,15.46 39.87,15.46 42.72,12.36 42.72,3.15" fill="none" stroke="#2a2a2a" stroke-width="1.5" /></svg></div>
<svg class="abs" style="left:40.2px;top:472.6px" width="9" height="12" viewBox="0 0 9 12"><path d="M1.5 1.1L6.5 5.4L1.5 9.700z" fill="none" stroke="#000" stroke-width="1.15" stroke-linejoin="miter"/></svg>
<div class="row" id="c10" style="left:58px;top:492px;width:206.7px"><span id="ct10" style="left:58.5px;letter-spacing:0.166px;">screen-halterung-unten:1</span><svg class="abs" style="left:0;top:0" width="46" height="20" viewBox="0 0 46 20"><path d="M2.93 10.31Q10.89 1.93 18.85 10.31Q10.89 18.69 2.93 10.31Z" fill="none" stroke="#808080" stroke-width="0.85" stroke-linejoin="round" /><circle cx="10.89" cy="10.31" r="3.02" fill="none" stroke="#808080" stroke-width="0.85" /><polyline points="5.78,5.28 15.71,15.25" fill="none" stroke="#f2f2f2" stroke-width="2.2" /><polyline points="5.95,5.20 15.71,15.13" fill="none" stroke="#808080" stroke-width="0.9" /></svg><svg class="abs" style="left:0;top:0" width="46" height="20" viewBox="0 0 46 20"><defs><linearGradient id="cg" x1="0" y1="0" x2="0" y2="1"><stop offset="0" stop-color="#dde1ea"/><stop offset="1" stop-color="#b3bccd"/></linearGradient></defs><polygon points="29.74,6.20 39.79,6.20 39.79,15.21 29.74,15.21" fill="url(#cg)" /><polygon points="39.79,6.20 42.72,3.27 42.72,12.28 39.79,15.21" fill="#9fb0c6" /><polyline points="29.74,6.08 32.67,3.15" fill="none" stroke="#333" stroke-width="0.9" /><polyline points="29.65,15.46 39.87,15.46 42.72,12.36 42.72,3.15" fill="none" stroke="#2a2a2a" stroke-width="1.5" /></svg></div>
<svg class="abs" style="left:40.2px;top:496.6px" width="9" height="12" viewBox="0 0 9 12"><path d="M1.5 1.1L6.5 5.4L1.5 9.700z" fill="none" stroke="#000" stroke-width="1.15" stroke-linejoin="miter"/></svg>
<div class="row" id="c11" style="left:58px;top:516px;width:202.8px"><span id="ct11" style="left:58.5px;letter-spacing:0.179px;">screen-halterung-oben:1</span><svg class="abs" style="left:0;top:0" width="46" height="20" viewBox="0 0 46 20"><path d="M2.93 10.31Q10.89 1.93 18.85 10.31Q10.89 18.69 2.93 10.31Z" fill="none" stroke="#808080" stroke-width="0.85" stroke-linejoin="round" /><circle cx="10.89" cy="10.31" r="3.02" fill="none" stroke="#808080" stroke-width="0.85" /><polyline points="5.78,5.28 15.71,15.25" fill="none" stroke="#f2f2f2" stroke-width="2.2" /><polyline points="5.95,5.20 15.71,15.13" fill="none" stroke="#808080" stroke-width="0.9" /></svg><svg class="abs" style="left:0;top:0" width="46" height="20" viewBox="0 0 46 20"><defs><linearGradient id="cg" x1="0" y1="0" x2="0" y2="1"><stop offset="0" stop-color="#dde1ea"/><stop offset="1" stop-color="#b3bccd"/></linearGradient></defs><polygon points="29.74,6.20 39.79,6.20 39.79,15.21 29.74,15.21" fill="url(#cg)" /><polygon points="39.79,6.20 42.72,3.27 42.72,12.28 39.79,15.21" fill="#9fb0c6" /><polyline points="29.74,6.08 32.67,3.15" fill="none" stroke="#333" stroke-width="0.9" /><polyline points="29.65,15.46 39.87,15.46 42.72,12.36 42.72,3.15" fill="none" stroke="#2a2a2a" stroke-width="1.5" /></svg></div>
<svg class="abs" style="left:40.2px;top:520.6px" width="9" height="12" viewBox="0 0 9 12"><path d="M1.5 1.1L6.5 5.4L1.5 9.700z" fill="none" stroke="#000" stroke-width="1.15" stroke-linejoin="miter"/></svg>
<div class="row" id="c12" style="left:58px;top:540px;width:202.8px"><span id="ct12" style="left:58.5px;letter-spacing:0.216px;">screen-halterung-links:1</span><svg class="abs" style="left:0;top:0" width="46" height="20" viewBox="0 0 46 20"><path d="M2.93 10.31Q10.89 1.93 18.85 10.31Q10.89 18.69 2.93 10.31Z" fill="none" stroke="#808080" stroke-width="0.85" stroke-linejoin="round" /><circle cx="10.89" cy="10.31" r="3.02" fill="none" stroke="#808080" stroke-width="0.85" /><polyline points="5.78,5.28 15.71,15.25" fill="none" stroke="#f2f2f2" stroke-width="2.2" /><polyline points="5.95,5.20 15.71,15.13" fill="none" stroke="#808080" stroke-width="0.9" /></svg><svg class="abs" style="left:0;top:0" width="46" height="20" viewBox="0 0 46 20"><defs><linearGradient id="cg" x1="0" y1="0" x2="0" y2="1"><stop offset="0" stop-color="#dde1ea"/><stop offset="1" stop-color="#b3bccd"/></linearGradient></defs><polygon points="29.74,6.20 39.79,6.20 39.79,15.21 29.74,15.21" fill="url(#cg)" /><polygon points="39.79,6.20 42.72,3.27 42.72,12.28 39.79,15.21" fill="#9fb0c6" /><polyline points="29.74,6.08 32.67,3.15" fill="none" stroke="#333" stroke-width="0.9" /><polyline points="29.65,15.46 39.87,15.46 42.72,12.36 42.72,3.15" fill="none" stroke="#2a2a2a" stroke-width="1.5" /></svg></div>
<svg class="abs" style="left:40.2px;top:544.6px" width="9" height="12" viewBox="0 0 9 12"><path d="M1.5 1.1L6.5 5.4L1.5 9.700z" fill="none" stroke="#000" stroke-width="1.15" stroke-linejoin="miter"/></svg>
<div class="row" id="c13" style="left:58px;top:564px;width:210.8px"><span id="ct13" style="left:58.5px;letter-spacing:0.162px;">screen-halterung-rechts:1</span><svg class="abs" style="left:0;top:0" width="46" height="20" viewBox="0 0 46 20"><path d="M2.93 10.31Q10.89 1.93 18.85 10.31Q10.89 18.69 2.93 10.31Z" fill="none" stroke="#808080" stroke-width="0.85" stroke-linejoin="round" /><circle cx="10.89" cy="10.31" r="3.02" fill="none" stroke="#808080" stroke-width="0.85" /><polyline points="5.78,5.28 15.71,15.25" fill="none" stroke="#f2f2f2" stroke-width="2.2" /><polyline points="5.95,5.20 15.71,15.13" fill="none" stroke="#808080" stroke-width="0.9" /></svg><svg class="abs" style="left:0;top:0" width="46" height="20" viewBox="0 0 46 20"><defs><linearGradient id="cg" x1="0" y1="0" x2="0" y2="1"><stop offset="0" stop-color="#dde1ea"/><stop offset="1" stop-color="#b3bccd"/></linearGradient></defs><polygon points="29.74,6.20 39.79,6.20 39.79,15.21 29.74,15.21" fill="url(#cg)" /><polygon points="39.79,6.20 42.72,3.27 42.72,12.28 39.79,15.21" fill="#9fb0c6" /><polyline points="29.74,6.08 32.67,3.15" fill="none" stroke="#333" stroke-width="0.9" /><polyline points="29.65,15.46 39.87,15.46 42.72,12.36 42.72,3.15" fill="none" stroke="#2a2a2a" stroke-width="1.5" /></svg></div>
<svg class="abs" style="left:40.2px;top:568.6px" width="9" height="12" viewBox="0 0 9 12"><path d="M1.5 1.1L6.5 5.4L1.5 9.700z" fill="none" stroke="#000" stroke-width="1.15" stroke-linejoin="miter"/></svg>
<div class="row" id="c14" style="left:58px;top:588px;width:178.8px"><span id="ct14" style="left:58.5px;letter-spacing:0.098px;">screen-abdeckung:1</span><svg class="abs" style="left:0;top:0" width="46" height="20" viewBox="0 0 46 20"><path d="M2.93 10.31Q10.89 1.93 18.85 10.31Q10.89 18.69 2.93 10.31Z" fill="none" stroke="#808080" stroke-width="0.85" stroke-linejoin="round" /><circle cx="10.89" cy="10.31" r="3.02" fill="none" stroke="#808080" stroke-width="0.85" /><polyline points="5.78,5.28 15.71,15.25" fill="none" stroke="#f2f2f2" stroke-width="2.2" /><polyline points="5.95,5.20 15.71,15.13" fill="none" stroke="#808080" stroke-width="0.9" /></svg><svg class="abs" style="left:0;top:0" width="46" height="20" viewBox="0 0 46 20"><defs><linearGradient id="cg" x1="0" y1="0" x2="0" y2="1"><stop offset="0" stop-color="#dde1ea"/><stop offset="1" stop-color="#b3bccd"/></linearGradient></defs><polygon points="29.74,6.20 39.79,6.20 39.79,15.21 29.74,15.21" fill="url(#cg)" /><polygon points="39.79,6.20 42.72,3.27 42.72,12.28 39.79,15.21" fill="#9fb0c6" /><polyline points="29.74,6.08 32.67,3.15" fill="none" stroke="#333" stroke-width="0.9" /><polyline points="29.65,15.46 39.87,15.46 42.72,12.36 42.72,3.15" fill="none" stroke="#2a2a2a" stroke-width="1.5" /></svg></div>
<svg class="abs" style="left:40.2px;top:592.6px" width="9" height="12" viewBox="0 0 9 12"><path d="M1.5 1.1L6.5 5.4L1.5 9.700z" fill="none" stroke="#000" stroke-width="1.15" stroke-linejoin="miter"/></svg>
<div class="row" id="c15" style="left:58px;top:612px;width:178.8px"><span id="ct15" style="left:58.5px;letter-spacing:0.112px;">backmodule-small:1</span><svg class="abs" style="left:0;top:0" width="46" height="20" viewBox="0 0 46 20"><path d="M2.93 10.31Q10.89 1.93 18.85 10.31Q10.89 18.69 2.93 10.31Z" fill="none" stroke="#808080" stroke-width="0.85" stroke-linejoin="round" /><circle cx="10.89" cy="10.31" r="3.02" fill="none" stroke="#808080" stroke-width="0.85" /><polyline points="5.78,5.28 15.71,15.25" fill="none" stroke="#f2f2f2" stroke-width="2.2" /><polyline points="5.95,5.20 15.71,15.13" fill="none" stroke="#808080" stroke-width="0.9" /></svg><svg class="abs" style="left:0;top:0" width="46" height="20" viewBox="0 0 46 20"><defs><linearGradient id="cg" x1="0" y1="0" x2="0" y2="1"><stop offset="0" stop-color="#dde1ea"/><stop offset="1" stop-color="#b3bccd"/></linearGradient></defs><polygon points="29.74,6.20 39.79,6.20 39.79,15.21 29.74,15.21" fill="url(#cg)" /><polygon points="39.79,6.20 42.72,3.27 42.72,12.28 39.79,15.21" fill="#9fb0c6" /><polyline points="29.74,6.08 32.67,3.15" fill="none" stroke="#333" stroke-width="0.9" /><polyline points="29.65,15.46 39.87,15.46 42.72,12.36 42.72,3.15" fill="none" stroke="#2a2a2a" stroke-width="1.5" /></svg></div>
<svg class="abs" style="left:40.2px;top:616.6px" width="9" height="12" viewBox="0 0 9 12"><path d="M1.5 1.1L6.5 5.4L1.5 9.700z" fill="none" stroke="#000" stroke-width="1.15" stroke-linejoin="miter"/></svg>
<div class="row" id="c16" style="left:58px;top:636px;width:198.7px"><span id="ct16" style="left:58.5px;letter-spacing:0.290px;">backmodule-4d-norm:1</span><svg class="abs" style="left:0;top:0" width="46" height="20" viewBox="0 0 46 20"><path d="M2.93 10.31Q10.89 1.93 18.85 10.31Q10.89 18.69 2.93 10.31Z" fill="none" stroke="#808080" stroke-width="0.85" stroke-linejoin="round" /><circle cx="10.89" cy="10.31" r="3.02" fill="none" stroke="#808080" stroke-width="0.85" /><polyline points="5.78,5.28 15.71,15.25" fill="none" stroke="#f2f2f2" stroke-width="2.2" /><polyline points="5.95,5.20 15.71,15.13" fill="none" stroke="#808080" stroke-width="0.9" /></svg><svg class="abs" style="left:0;top:0" width="46" height="20" viewBox="0 0 46 20"><defs><linearGradient id="cg" x1="0" y1="0" x2="0" y2="1"><stop offset="0" stop-color="#dde1ea"/><stop offset="1" stop-color="#b3bccd"/></linearGradient></defs><polygon points="29.74,6.20 39.79,6.20 39.79,15.21 29.74,15.21" fill="url(#cg)" /><polygon points="39.79,6.20 42.72,3.27 42.72,12.28 39.79,15.21" fill="#9fb0c6" /><polyline points="29.74,6.08 32.67,3.15" fill="none" stroke="#333" stroke-width="0.9" /><polyline points="29.65,15.46 39.87,15.46 42.72,12.36 42.72,3.15" fill="none" stroke="#2a2a2a" stroke-width="1.5" /></svg></div>
<svg class="abs" style="left:40.2px;top:640.6px" width="9" height="12" viewBox="0 0 9 12"><path d="M1.5 1.1L6.5 5.4L1.5 9.700z" fill="none" stroke="#000" stroke-width="1.15" stroke-linejoin="miter"/></svg>
<div class="row" id="c17" style="left:58px;top:660px;width:142.6px"><span id="ct17" style="left:58.5px;letter-spacing:-0.053px;">backmodule:1</span><svg class="abs" style="left:0;top:0" width="46" height="20" viewBox="0 0 46 20"><path d="M2.93 10.31Q10.89 1.93 18.85 10.31Q10.89 18.69 2.93 10.31Z" fill="none" stroke="#808080" stroke-width="0.85" stroke-linejoin="round" /><circle cx="10.89" cy="10.31" r="3.02" fill="none" stroke="#808080" stroke-width="0.85" /><polyline points="5.78,5.28 15.71,15.25" fill="none" stroke="#f2f2f2" stroke-width="2.2" /><polyline points="5.95,5.20 15.71,15.13" fill="none" stroke="#808080" stroke-width="0.9" /></svg><svg class="abs" style="left:0;top:0" width="46" height="20" viewBox="0 0 46 20"><defs><linearGradient id="cg" x1="0" y1="0" x2="0" y2="1"><stop offset="0" stop-color="#dde1ea"/><stop offset="1" stop-color="#b3bccd"/></linearGradient></defs><polygon points="29.74,6.20 39.79,6.20 39.79,15.21 29.74,15.21" fill="url(#cg)" /><polygon points="39.79,6.20 42.72,3.27 42.72,12.28 39.79,15.21" fill="#9fb0c6" /><polyline points="29.74,6.08 32.67,3.15" fill="none" stroke="#333" stroke-width="0.9" /><polyline points="29.65,15.46 39.87,15.46 42.72,12.36 42.72,3.15" fill="none" stroke="#2a2a2a" stroke-width="1.5" /></svg></div>
<svg class="abs" style="left:40.2px;top:664.6px" width="9" height="12" viewBox="0 0 9 12"><path d="M1.5 1.1L6.5 5.4L1.5 9.700z" fill="none" stroke="#000" stroke-width="1.15" stroke-linejoin="miter"/></svg>
<div class="row" id="c18" style="left:58px;top:684px;width:162.5px"><span id="ct18" style="left:58.5px;letter-spacing:0.156px;">backmodule-air:1</span><svg class="abs" style="left:0;top:0" width="46" height="20" viewBox="0 0 46 20"><path d="M2.93 10.31Q10.89 1.93 18.85 10.31Q10.89 18.69 2.93 10.31Z" fill="none" stroke="#808080" stroke-width="0.85" stroke-linejoin="round" /><circle cx="10.89" cy="10.31" r="3.02" fill="none" stroke="#808080" stroke-width="0.85" /><polyline points="5.78,5.28 15.71,15.25" fill="none" stroke="#f2f2f2" stroke-width="2.2" /><polyline points="5.95,5.20 15.71,15.13" fill="none" stroke="#808080" stroke-width="0.9" /></svg><svg class="abs" style="left:0;top:0" width="46" height="20" viewBox="0 0 46 20"><defs><linearGradient id="cg" x1="0" y1="0" x2="0" y2="1"><stop offset="0" stop-color="#dde1ea"/><stop offset="1" stop-color="#b3bccd"/></linearGradient></defs><polygon points="29.74,6.20 39.79,6.20 39.79,15.21 29.74,15.21" fill="url(#cg)" /><polygon points="39.79,6.20 42.72,3.27 42.72,12.28 39.79,15.21" fill="#9fb0c6" /><polyline points="29.74,6.08 32.67,3.15" fill="none" stroke="#333" stroke-width="0.9" /><polyline points="29.65,15.46 39.87,15.46 42.72,12.36 42.72,3.15" fill="none" stroke="#2a2a2a" stroke-width="1.5" /></svg></div>
<svg class="abs" style="left:40.2px;top:688.6px" width="9" height="12" viewBox="0 0 9 12"><path d="M1.5 1.1L6.5 5.4L1.5 9.700z" fill="none" stroke="#000" stroke-width="1.15" stroke-linejoin="miter"/></svg>
<div class="row" id="c19" style="left:58px;top:708px;width:230.6px"><span id="ct19" style="left:58.5px;letter-spacing:0.348px;">backmodule-small-2d-norm:1</span><svg class="abs" style="left:0;top:0" width="46" height="20" viewBox="0 0 46 20"><path d="M2.93 10.31Q10.89 1.93 18.85 10.31Q10.89 18.69 2.93 10.31Z" fill="none" stroke="#808080" stroke-width="0.85" stroke-linejoin="round" /><circle cx="10.89" cy="10.31" r="3.02" fill="none" stroke="#808080" stroke-width="0.85" /><polyline points="5.78,5.28 15.71,15.25" fill="none" stroke="#f2f2f2" stroke-width="2.2" /><polyline points="5.95,5.20 15.71,15.13" fill="none" stroke="#808080" stroke-width="0.9" /></svg><svg class="abs" style="left:0;top:0" width="46" height="20" viewBox="0 0 46 20"><defs><linearGradient id="cg" x1="0" y1="0" x2="0" y2="1"><stop offset="0" stop-color="#dde1ea"/><stop offset="1" stop-color="#b3bccd"/></linearGradient></defs><polygon points="29.74,6.20 39.79,6.20 39.79,15.21 29.74,15.21" fill="url(#cg)" /><polygon points="39.79,6.20 42.72,3.27 42.72,12.28 39.79,15.21" fill="#9fb0c6" /><polyline points="29.74,6.08 32.67,3.15" fill="none" stroke="#333" stroke-width="0.9" /><polyline points="29.65,15.46 39.87,15.46 42.72,12.36 42.72,3.15" fill="none" stroke="#2a2a2a" stroke-width="1.5" /></svg></div>
<svg class="abs" style="left:40.2px;top:712.6px" width="9" height="12" viewBox="0 0 9 12"><path d="M1.5 1.1L6.5 5.4L1.5 9.700z" fill="none" stroke="#000" stroke-width="1.15" stroke-linejoin="miter"/></svg>
<div class="row" id="c20" style="left:58px;top:732px;width:198.7px"><span id="ct20" style="left:58.5px;letter-spacing:0.290px;">backmodule-6d-norm:1</span><svg class="abs" style="left:0;top:0" width="46" height="20" viewBox="0 0 46 20"><path d="M2.93 10.31Q10.89 1.93 18.85 10.31Q10.89 18.69 2.93 10.31Z" fill="none" stroke="#808080" stroke-width="0.85" stroke-linejoin="round" /><circle cx="10.89" cy="10.31" r="3.02" fill="none" stroke="#808080" stroke-width="0.85" /><polyline points="5.78,5.28 15.71,15.25" fill="none" stroke="#f2f2f2" stroke-width="2.2" /><polyline points="5.95,5.20 15.71,15.13" fill="none" stroke="#808080" stroke-width="0.9" /></svg><svg class="abs" style="left:0;top:0" width="46" height="20" viewBox="0 0 46 20"><defs><linearGradient id="cg" x1="0" y1="0" x2="0" y2="1"><stop offset="0" stop-color="#dde1ea"/><stop offset="1" stop-color="#b3bccd"/></linearGradient></defs><polygon points="29.74,6.20 39.79,6.20 39.79,15.21 29.74,15.21" fill="url(#cg)" /><polygon points="39.79,6.20 42.72,3.27 42.72,12.28 39.79,15.21" fill="#9fb0c6" /><polyline points="29.74,6.08 32.67,3.15" fill="none" stroke="#333" stroke-width="0.9" /><polyline points="29.65,15.46 39.87,15.46 42.72,12.36 42.72,3.15" fill="none" stroke="#2a2a2a" stroke-width="1.5" /></svg></div>
<svg class="abs" style="left:40.2px;top:736.6px" width="9" height="12" viewBox="0 0 9 12"><path d="M1.5 1.1L6.5 5.4L1.5 9.700z" fill="none" stroke="#000" stroke-width="1.15" stroke-linejoin="miter"/></svg>
<div class="row" id="c21" style="left:58px;top:756px;width:210.9px"><span id="ct21" style="left:58.5px;letter-spacing:0.124px;">frontmodule-screwcover:1</span><svg class="abs" style="left:0;top:0" width="46" height="20" viewBox="0 0 46 20"><path d="M2.93 10.31Q10.89 1.93 18.85 10.31Q10.89 18.69 2.93 10.31Z" fill="none" stroke="#808080" stroke-width="0.85" stroke-linejoin="round" /><circle cx="10.89" cy="10.31" r="3.02" fill="none" stroke="#808080" stroke-width="0.85" /><polyline points="5.78,5.28 15.71,15.25" fill="none" stroke="#f2f2f2" stroke-width="2.2" /><polyline points="5.95,5.20 15.71,15.13" fill="none" stroke="#808080" stroke-width="0.9" /></svg><svg class="abs" style="left:0;top:0" width="46" height="20" viewBox="0 0 46 20"><defs><linearGradient id="sg" x1="0" y1="0" x2="0" y2="1"><stop offset="0" stop-color="#dde1ea"/><stop offset="1" stop-color="#b3bccd"/></linearGradient></defs><polygon points="29.32,5.28 35.18,5.28 35.18,16.17 29.32,16.17" fill="url(#sg)" /><polygon points="35.18,5.28 36.86,3.61 36.86,10.10 35.18,11.57" fill="#a9b6c8" /><polygon points="35.60,11.15 41.05,11.15 41.05,16.17 35.60,16.17" fill="url(#sg)" /><polygon points="41.05,11.15 42.72,9.68 42.72,14.71 41.05,16.17" fill="#a9b6c8" /><polygon points="35.60,11.15 37.28,9.68 42.72,9.68 41.05,11.15" fill="#e6e9ef" /><polyline points="29.11,3.40 29.11,16.42 41.13,16.42" fill="none" stroke="#2a2a2a" stroke-width="1.5" /><polyline points="35.27,11.15 35.27,16.42" fill="none" stroke="#2a2a2a" stroke-width="1.2" /><polyline points="29.23,11.23 35.27,11.23" fill="none" stroke="#555" stroke-width="0.8" /></svg></div>
<svg class="abs" style="left:40.2px;top:760.6px" width="9" height="12" viewBox="0 0 9 12"><path d="M1.5 1.1L6.5 5.4L1.5 9.700z" fill="none" stroke="#000" stroke-width="1.15" stroke-linejoin="miter"/></svg>
<div class="row" id="c22" style="left:58px;top:780px;width:242.6px"><span id="ct22" style="left:58.5px;letter-spacing:0.340px;">Deck-Switcher-Front-Module P...</span><svg class="abs" style="left:0;top:0" width="46" height="20" viewBox="0 0 46 20"><path d="M2.85 9.97Q10.89 0.13 18.93 9.97Q10.89 19.82 2.85 9.97Z" fill="#8e8e8e" /><circle cx="10.89" cy="9.97" r="3.35" fill="#f2f2f2" /><circle cx="10.89" cy="9.97" r="1.97" fill="#8e8e8e" /></svg><svg class="abs" style="left:0;top:0" width="46" height="20" viewBox="0 0 46 20"><polygon points="28.27,6.83 30.66,4.32 35.39,4.32 35.39,11.10 28.27,11.10" fill="#dedede" stroke="#585858" stroke-width="1.3" stroke-linejoin="round" /><polygon points="28.27,11.94 34.14,11.94 34.14,17.51 28.27,17.51" fill="#dedede" stroke="#585858" stroke-width="1.3" stroke-linejoin="round" /><polygon points="34.97,11.94 41.46,11.44 41.46,16.26 40.21,17.51 34.97,17.51" fill="#dedede" stroke="#585858" stroke-width="1.3" stroke-linejoin="round" /><rect x="36.23" y="1.81" width="8.17" height="9.42" fill="#f2f2f2" /><circle cx="40.42" cy="3.48" r="0.71" fill="none" stroke="#111" stroke-width="0.9" /><polyline points="40.42,4.24 40.42,9.26" fill="none" stroke="#111" stroke-width="1.2" /><polyline points="38.83,5.49 42.01,5.49" fill="none" stroke="#111" stroke-width="1" /><path d="M37.28 6.83Q38.11 9.35 40.42 9.26Q42.72 9.35 43.56 6.83" fill="none" stroke="#111" stroke-width="1.2" stroke-linejoin="round" /><circle cx="37.07" cy="7.46" r="0.50" fill="#111" /></svg></div>
<svg class="abs" style="left:40.2px;top:784.6px" width="9" height="12" viewBox="0 0 9 12"><path d="M1.5 1.1L6.5 5.4L1.5 9.700z" fill="none" stroke="#000" stroke-width="1.15" stroke-linejoin="miter"/></svg>
<div class="ph" style="top:814px;height:25px"><span id="phk" style="letter-spacing:0.531px;">KOMMENTARE</span></div>
<div class="abs" style="left:282.8px;top:821.8px;width:9px;height:9px;border-radius:50%;background:#1a1a1a"></div>
<div class="abs" style="left:284.6px;top:825.5999999999999px;width:5.4px;height:1.4px;background:#fff"></div>
<div class="abs" style="left:286.6px;top:823.5999999999999px;width:1.4px;height:5.4px;background:#fff"></div>
<svg class="abs" style="left:0;top:0" width="1920" height="843" viewBox="56 181 1920 843"><rect x="897.91" y="994.19" width="236.74" height="23.29" fill="#f2f2f2" /><path d="M907.56 1003.43L907.56 1013.07 911.14 1013.07 911.14 1003.43 913.76 1003.43 909.35 997.64 904.94 1003.43Z" fill="#fff" stroke="#3a3a3a" stroke-width="0.9" stroke-linejoin="round" /><path d="M914.45 1003.70Q917.89 1006.87 915.14 1008.94Q909.63 1011.97 904.53 1009.63" fill="none" stroke="#3a3a3a" stroke-width="1.4" stroke-linejoin="round" /><path d="M904.80 1004.53Q900.67 1006.18 903.15 1008.25" fill="none" stroke="#3a3a3a" stroke-width="1.4" stroke-linejoin="round" /><polygon points="903.15,1009.63 906.87,1007.01 907.01,1011.97" fill="#3a3a3a" /><polygon points="922.30,1004.11 927.82,1004.11 925.06,1007.42" fill="#222" /><path d="M934.43 1004.11L938.56 999.29 942.01 1002.05 944.77 999.29 949.59 1004.11 949.59 1013.07 934.43 1013.07Z" fill="#fff" stroke="#3a3a3a" stroke-width="1" stroke-linejoin="round" /><rect x="937.60" y="1006.87" width="8.82" height="3.44" fill="#9db0c8" stroke="#3a3a3a" stroke-width="0.8" /><path d="M964.06 1013.07Q960.61 1007.56 961.30 1005.49Q962.68 1003.43 964.75 1006.87L964.33 1000.67Q965.71 998.60 967.09 1000.67L967.36 999.29Q969.02 997.64 970.40 999.57L970.67 1000.67Q972.05 999.02 973.43 1000.95L973.70 1002.74Q975.08 1001.36 975.91 1003.15Q976.46 1008.94 973.70 1013.07Z" fill="#fff" stroke="#3a3a3a" stroke-width="0.9" stroke-linejoin="round" /><polyline points="967.23,1000.67 967.23,1006.18" fill="none" stroke="#3a3a3a" stroke-width="0.7" /><polyline points="970.40,1000.67 970.40,1006.18" fill="none" stroke="#3a3a3a" stroke-width="0.7" /><polyline points="973.43,1000.67 973.43,1006.18" fill="none" stroke="#3a3a3a" stroke-width="0.7" /><circle cx="990.24" cy="1005.08" r="3.86" fill="#dbeaf2" stroke="#3a3a3a" stroke-width="1.2" /><polyline points="993.27,1008.25 997.82,1012.38" fill="none" stroke="#3a3a3a" stroke-width="2.2" stroke-linecap="round"/><polyline points="997.40,1000.39 1001.81,1000.39" fill="none" stroke="#3a3a3a" stroke-width="1" /><polyline points="999.61,998.19 999.61,1002.60" fill="none" stroke="#3a3a3a" stroke-width="1" /><polyline points="997.40,1004.53 1001.81,1004.53" fill="none" stroke="#3a3a3a" stroke-width="1" /><rect x="1012.29" y="998.19" width="15.43" height="14.88" fill="none" stroke="#3a3a3a" stroke-width="0.9" stroke-dasharray="2 1.4"/><circle cx="1018.49" cy="1004.53" r="5.79" fill="#dbeaf2" stroke="#3a3a3a" stroke-width="1.3" /><polyline points="1023.03,1009.21 1027.17,1013.07" fill="none" stroke="#3a3a3a" stroke-width="2.6" stroke-linecap="round"/><polygon points="1033.23,1004.11 1038.74,1004.11 1035.99,1007.42" fill="#222" /><rect x="1045.36" y="998.60" width="15.16" height="11.02" fill="#fff" stroke="#3a3a3a" stroke-width="1.2" /><rect x="1047.42" y="1000.67" width="11.02" height="7.17" fill="#8fb0dc" stroke="#3a3a3a" stroke-width="0.6" /><polygon points="1050.87,1010.04 1055.00,1010.04 1056.66,1013.07 1049.22,1013.07" fill="#e8e8e8" stroke="#3a3a3a" stroke-width="0.6" stroke-linejoin="round" /><polygon points="1063.27,1004.11 1068.78,1004.11 1066.03,1007.42" fill="#222" /><rect x="1076.36" y="998.60" width="15.16" height="14.47" fill="#fff" stroke="#3a3a3a" stroke-width="1" /><polyline points="1079.39,998.60 1079.39,1013.07" fill="none" stroke="#3a3a3a" stroke-width="0.9" /><polyline points="1076.36,1001.50 1091.52,1001.50" fill="none" stroke="#3a3a3a" stroke-width="0.9" /><polyline points="1082.43,998.60 1082.43,1013.07" fill="none" stroke="#3a3a3a" stroke-width="0.9" /><polyline points="1076.36,1004.39 1091.52,1004.39" fill="none" stroke="#3a3a3a" stroke-width="0.9" /><polyline points="1085.46,998.60 1085.46,1013.07" fill="none" stroke="#3a3a3a" stroke-width="0.9" /><polyline points="1076.36,1007.28 1091.52,1007.28" fill="none" stroke="#3a3a3a" stroke-width="0.9" /><polyline points="1088.49,998.60 1088.49,1013.07" fill="none" stroke="#3a3a3a" stroke-width="0.9" /><polyline points="1076.36,1010.18 1091.52,1010.18" fill="none" stroke="#3a3a3a" stroke-width="0.9" /><rect x="1076.36" y="1007.28" width="15.16" height="5.79" fill="#8f9bb5" opacity="0.45"/><polygon points="1094.28,1004.11 1099.79,1004.11 1097.03,1007.42" fill="#222" /><rect x="1107.37" y="999.29" width="14.06" height="12.40" fill="#8fa8d8" stroke="#2a4a8c" stroke-width="1.4" /><polyline points="1114.39,999.29 1114.39,1011.69" fill="none" stroke="#2a4a8c" stroke-width="1.4" /><polyline points="1107.37,1005.49 1121.42,1005.49" fill="none" stroke="#2a4a8c" stroke-width="1.4" /><rect x="1109.16" y="1001.22" width="3.31" height="2.20" fill="#bcd0f0" /><rect x="1116.32" y="1001.22" width="3.31" height="2.20" fill="#bcd0f0" /><rect x="1109.16" y="1007.56" width="3.31" height="2.20" fill="#bcd0f0" /><rect x="1116.32" y="1007.56" width="3.31" height="2.20" fill="#bcd0f0" /><polygon points="1125.28,1004.11 1130.79,1004.11 1128.04,1007.42" fill="#222" /></svg>
</div>
</div></body></html>
